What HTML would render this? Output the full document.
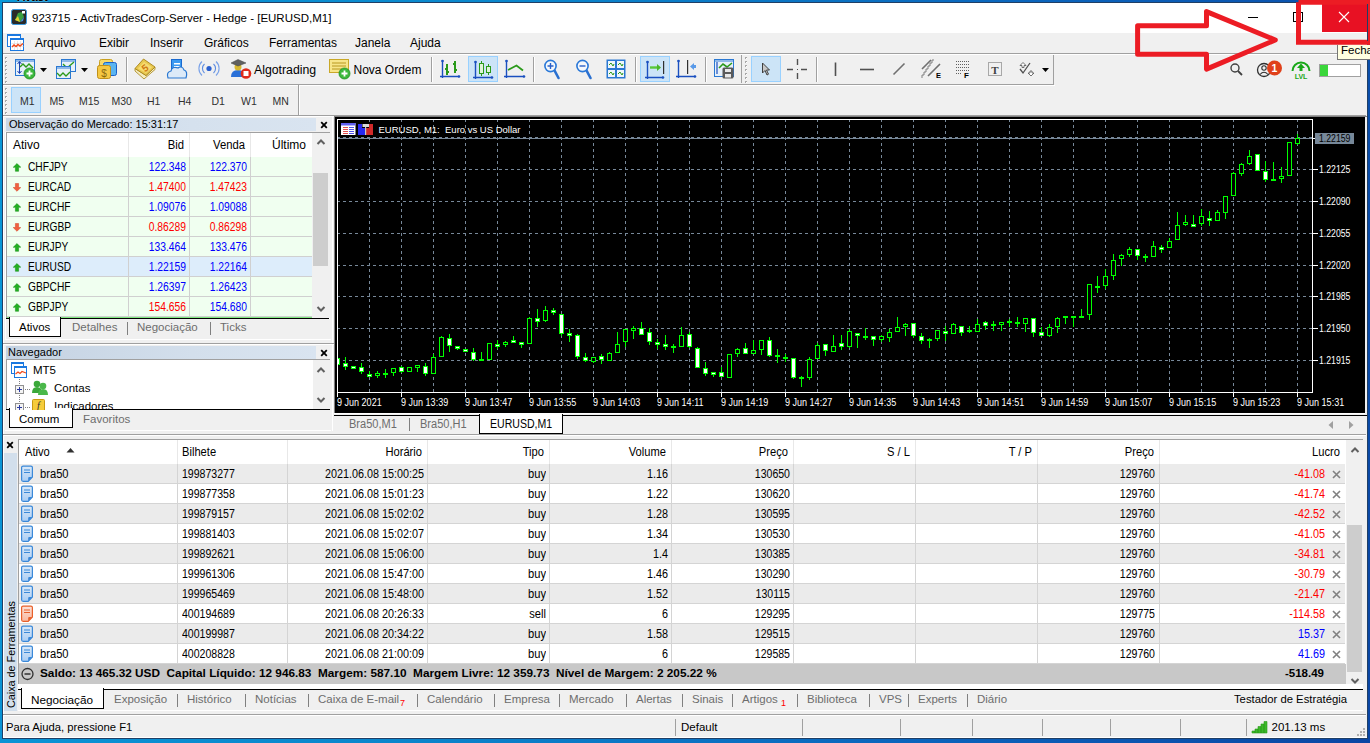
<!DOCTYPE html><html><head><meta charset="utf-8"><style>
*{margin:0;padding:0;box-sizing:border-box}
html,body{width:1370px;height:743px;overflow:hidden}
body{position:relative;background:linear-gradient(100deg,#0a98d8 0%,#0a86cc 35%,#0a64bc 70%,#0a46a4 100%);font-family:"Liberation Sans",sans-serif}
.t{position:absolute;white-space:nowrap;line-height:1;font-family:"Liberation Sans",sans-serif}
.r{position:absolute}
</style></head><body><div class="r" style="left:2px;top:2px;width:1366px;height:737px;background:#f0f0f0;border:1px solid #1f3f66"></div>
<div class="r" style="left:3px;top:3px;width:1px;height:734px;background:#fff;"></div>
<div class="r" style="left:3px;top:737px;width:1364px;height:1px;background:#fff;"></div>
<div class="r" style="left:3px;top:3px;width:1363px;height:30px;background:#fff;"></div>
<div class="t" style="left:32px;top:13px;font-size:11.5px;color:#000;">923715 - ActivTradesCorp-Server - Hedge - [EURUSD,M1]</div>
<div class="r" style="left:3px;top:33px;width:1363px;height:20px;background:#f0f0f0;"></div>
<div class="t" style="left:35px;top:37px;font-size:12px;color:#000;">Arquivo</div>
<div class="t" style="left:99px;top:37px;font-size:12px;color:#000;">Exibir</div>
<div class="t" style="left:150px;top:37px;font-size:12px;color:#000;">Inserir</div>
<div class="t" style="left:204px;top:37px;font-size:12px;color:#000;">Gráficos</div>
<div class="t" style="left:269px;top:37px;font-size:12px;color:#000;">Ferramentas</div>
<div class="t" style="left:355px;top:37px;font-size:12px;color:#000;">Janela</div>
<div class="t" style="left:410px;top:37px;font-size:12px;color:#000;">Ajuda</div>
<div class="r" style="left:3px;top:53px;width:1363px;height:1px;background:#a0a0a0;"></div>
<div class="r" style="left:3px;top:54px;width:1363px;height:1px;background:#fff;"></div>
<div class="r" style="left:3px;top:84px;width:1051px;height:1px;background:#a0a0a0;"></div>
<div class="r" style="left:3px;top:85px;width:1052px;height:1px;background:#fff;"></div>
<div class="r" style="left:3px;top:115px;width:1363px;height:1px;background:#a0a0a0;"></div>
<div class="r" style="left:3px;top:116px;width:1363px;height:1px;background:#fff;"></div>
<svg style="position:absolute;left:334px;top:116px" width="1033" height="318" viewBox="334 116 1033 318" shape-rendering="crispEdges">
<rect x="334" y="117" width="1033" height="296" fill="#000"/><rect x="334" y="117" width="1" height="296" fill="#808080"/><rect x="334" y="116" width="1033" height="1" fill="#808080"/>
<line x1="369.5" y1="119" x2="369.5" y2="392" stroke="#778899" stroke-dasharray="3 3"/>
<line x1="401.5" y1="119" x2="401.5" y2="392" stroke="#778899" stroke-dasharray="3 3"/>
<line x1="433.5" y1="119" x2="433.5" y2="392" stroke="#778899" stroke-dasharray="3 3"/>
<line x1="465.5" y1="119" x2="465.5" y2="392" stroke="#778899" stroke-dasharray="3 3"/>
<line x1="497.5" y1="119" x2="497.5" y2="392" stroke="#778899" stroke-dasharray="3 3"/>
<line x1="529.5" y1="119" x2="529.5" y2="392" stroke="#778899" stroke-dasharray="3 3"/>
<line x1="561.5" y1="119" x2="561.5" y2="392" stroke="#778899" stroke-dasharray="3 3"/>
<line x1="593.5" y1="119" x2="593.5" y2="392" stroke="#778899" stroke-dasharray="3 3"/>
<line x1="625.5" y1="119" x2="625.5" y2="392" stroke="#778899" stroke-dasharray="3 3"/>
<line x1="657.5" y1="119" x2="657.5" y2="392" stroke="#778899" stroke-dasharray="3 3"/>
<line x1="689.5" y1="119" x2="689.5" y2="392" stroke="#778899" stroke-dasharray="3 3"/>
<line x1="721.5" y1="119" x2="721.5" y2="392" stroke="#778899" stroke-dasharray="3 3"/>
<line x1="753.5" y1="119" x2="753.5" y2="392" stroke="#778899" stroke-dasharray="3 3"/>
<line x1="785.5" y1="119" x2="785.5" y2="392" stroke="#778899" stroke-dasharray="3 3"/>
<line x1="817.5" y1="119" x2="817.5" y2="392" stroke="#778899" stroke-dasharray="3 3"/>
<line x1="849.5" y1="119" x2="849.5" y2="392" stroke="#778899" stroke-dasharray="3 3"/>
<line x1="881.5" y1="119" x2="881.5" y2="392" stroke="#778899" stroke-dasharray="3 3"/>
<line x1="913.5" y1="119" x2="913.5" y2="392" stroke="#778899" stroke-dasharray="3 3"/>
<line x1="945.5" y1="119" x2="945.5" y2="392" stroke="#778899" stroke-dasharray="3 3"/>
<line x1="977.5" y1="119" x2="977.5" y2="392" stroke="#778899" stroke-dasharray="3 3"/>
<line x1="1009.5" y1="119" x2="1009.5" y2="392" stroke="#778899" stroke-dasharray="3 3"/>
<line x1="1041.5" y1="119" x2="1041.5" y2="392" stroke="#778899" stroke-dasharray="3 3"/>
<line x1="1073.5" y1="119" x2="1073.5" y2="392" stroke="#778899" stroke-dasharray="3 3"/>
<line x1="1105.5" y1="119" x2="1105.5" y2="392" stroke="#778899" stroke-dasharray="3 3"/>
<line x1="1137.5" y1="119" x2="1137.5" y2="392" stroke="#778899" stroke-dasharray="3 3"/>
<line x1="1169.5" y1="119" x2="1169.5" y2="392" stroke="#778899" stroke-dasharray="3 3"/>
<line x1="1201.5" y1="119" x2="1201.5" y2="392" stroke="#778899" stroke-dasharray="3 3"/>
<line x1="1233.5" y1="119" x2="1233.5" y2="392" stroke="#778899" stroke-dasharray="3 3"/>
<line x1="1265.5" y1="119" x2="1265.5" y2="392" stroke="#778899" stroke-dasharray="3 3"/>
<line x1="1297.5" y1="119" x2="1297.5" y2="392" stroke="#778899" stroke-dasharray="3 3"/>
<line x1="337" y1="137.5" x2="1312" y2="137.5" stroke="#778899" stroke-dasharray="3 3"/>
<line x1="337" y1="169.5" x2="1312" y2="169.5" stroke="#778899" stroke-dasharray="3 3"/>
<line x1="337" y1="201.5" x2="1312" y2="201.5" stroke="#778899" stroke-dasharray="3 3"/>
<line x1="337" y1="233.5" x2="1312" y2="233.5" stroke="#778899" stroke-dasharray="3 3"/>
<line x1="337" y1="265.5" x2="1312" y2="265.5" stroke="#778899" stroke-dasharray="3 3"/>
<line x1="337" y1="296.5" x2="1312" y2="296.5" stroke="#778899" stroke-dasharray="3 3"/>
<line x1="337" y1="328.5" x2="1312" y2="328.5" stroke="#778899" stroke-dasharray="3 3"/>
<line x1="337" y1="360.5" x2="1312" y2="360.5" stroke="#778899" stroke-dasharray="3 3"/>
<line x1="338" y1="138.5" x2="1312" y2="138.5" stroke="#778899"/>
<rect x="337" y="356" width="1" height="11" fill="#00ff00"/>
<rect x="335" y="358" width="5" height="7" fill="#00ff00"/>
<rect x="336" y="359" width="3" height="5" fill="#fff"/>
<rect x="345" y="357" width="1" height="13" fill="#00ff00"/>
<rect x="343" y="363" width="5" height="4" fill="#00ff00"/>
<rect x="344" y="364" width="3" height="2" fill="#fff"/>
<rect x="353" y="366" width="1" height="3" fill="#00ff00"/>
<rect x="351" y="366" width="5" height="3" fill="#00ff00"/>
<rect x="352" y="367" width="3" height="1" fill="#fff"/>
<rect x="361" y="363" width="1" height="11" fill="#00ff00"/>
<rect x="359" y="367" width="5" height="5" fill="#00ff00"/>
<rect x="360" y="368" width="3" height="3" fill="#fff"/>
<rect x="369" y="371" width="1" height="6" fill="#00ff00"/>
<rect x="367" y="374" width="5" height="3" fill="#00ff00"/>
<rect x="368" y="375" width="3" height="1" fill="#fff"/>
<rect x="377" y="371" width="1" height="7" fill="#00ff00"/>
<rect x="375" y="373" width="5" height="3" fill="#00ff00"/>
<rect x="376" y="374" width="3" height="1" fill="#000"/>
<rect x="385" y="369" width="1" height="9" fill="#00ff00"/>
<rect x="383" y="373" width="5" height="2" fill="#00ff00"/>
<rect x="393" y="368" width="1" height="8" fill="#00ff00"/>
<rect x="391" y="368" width="5" height="5" fill="#00ff00"/>
<rect x="392" y="369" width="3" height="3" fill="#000"/>
<rect x="401" y="366" width="1" height="7" fill="#00ff00"/>
<rect x="399" y="367" width="5" height="5" fill="#00ff00"/>
<rect x="400" y="368" width="3" height="3" fill="#fff"/>
<rect x="409" y="367" width="1" height="5" fill="#00ff00"/>
<rect x="407" y="367" width="5" height="5" fill="#00ff00"/>
<rect x="408" y="368" width="3" height="3" fill="#000"/>
<rect x="417" y="365" width="1" height="7" fill="#00ff00"/>
<rect x="415" y="365" width="5" height="3" fill="#00ff00"/>
<rect x="416" y="366" width="3" height="1" fill="#000"/>
<rect x="425" y="363" width="1" height="13" fill="#00ff00"/>
<rect x="423" y="366" width="5" height="8" fill="#00ff00"/>
<rect x="424" y="367" width="3" height="6" fill="#fff"/>
<rect x="433" y="354" width="1" height="20" fill="#00ff00"/>
<rect x="431" y="357" width="5" height="17" fill="#00ff00"/>
<rect x="432" y="358" width="3" height="15" fill="#000"/>
<rect x="441" y="336" width="1" height="21" fill="#00ff00"/>
<rect x="439" y="337" width="5" height="20" fill="#00ff00"/>
<rect x="440" y="338" width="3" height="18" fill="#000"/>
<rect x="449" y="334" width="1" height="18" fill="#00ff00"/>
<rect x="447" y="338" width="5" height="8" fill="#00ff00"/>
<rect x="448" y="339" width="3" height="6" fill="#fff"/>
<rect x="457" y="346" width="1" height="4" fill="#00ff00"/>
<rect x="455" y="346" width="5" height="3" fill="#00ff00"/>
<rect x="456" y="347" width="3" height="1" fill="#fff"/>
<rect x="465" y="349" width="1" height="3" fill="#00ff00"/>
<rect x="463" y="349" width="5" height="3" fill="#00ff00"/>
<rect x="464" y="350" width="3" height="1" fill="#fff"/>
<rect x="473" y="348" width="1" height="13" fill="#00ff00"/>
<rect x="471" y="352" width="5" height="8" fill="#00ff00"/>
<rect x="472" y="353" width="3" height="6" fill="#fff"/>
<rect x="481" y="352" width="1" height="8" fill="#00ff00"/>
<rect x="479" y="359" width="5" height="2" fill="#00ff00"/>
<rect x="489" y="343" width="1" height="17" fill="#00ff00"/>
<rect x="487" y="343" width="5" height="17" fill="#00ff00"/>
<rect x="488" y="344" width="3" height="15" fill="#000"/>
<rect x="497" y="340" width="1" height="9" fill="#00ff00"/>
<rect x="495" y="344" width="5" height="3" fill="#00ff00"/>
<rect x="496" y="345" width="3" height="1" fill="#fff"/>
<rect x="505" y="341" width="1" height="6" fill="#00ff00"/>
<rect x="503" y="342" width="5" height="3" fill="#00ff00"/>
<rect x="504" y="343" width="3" height="1" fill="#000"/>
<rect x="513" y="336" width="1" height="7" fill="#00ff00"/>
<rect x="511" y="340" width="5" height="3" fill="#00ff00"/>
<rect x="512" y="341" width="3" height="1" fill="#fff"/>
<rect x="521" y="342" width="1" height="6" fill="#00ff00"/>
<rect x="519" y="342" width="5" height="3" fill="#00ff00"/>
<rect x="520" y="343" width="3" height="1" fill="#fff"/>
<rect x="529" y="317" width="1" height="27" fill="#00ff00"/>
<rect x="527" y="318" width="5" height="26" fill="#00ff00"/>
<rect x="528" y="319" width="3" height="24" fill="#000"/>
<rect x="537" y="309" width="1" height="18" fill="#00ff00"/>
<rect x="535" y="318" width="5" height="4" fill="#00ff00"/>
<rect x="536" y="319" width="3" height="2" fill="#fff"/>
<rect x="545" y="306" width="1" height="16" fill="#00ff00"/>
<rect x="543" y="310" width="5" height="11" fill="#00ff00"/>
<rect x="544" y="311" width="3" height="9" fill="#000"/>
<rect x="553" y="308" width="1" height="7" fill="#00ff00"/>
<rect x="551" y="310" width="5" height="3" fill="#00ff00"/>
<rect x="552" y="311" width="3" height="1" fill="#fff"/>
<rect x="561" y="314" width="1" height="22" fill="#00ff00"/>
<rect x="559" y="314" width="5" height="20" fill="#00ff00"/>
<rect x="560" y="315" width="3" height="18" fill="#fff"/>
<rect x="569" y="329" width="1" height="13" fill="#00ff00"/>
<rect x="567" y="333" width="5" height="3" fill="#00ff00"/>
<rect x="568" y="334" width="3" height="1" fill="#fff"/>
<rect x="577" y="334" width="1" height="25" fill="#00ff00"/>
<rect x="575" y="335" width="5" height="22" fill="#00ff00"/>
<rect x="576" y="336" width="3" height="20" fill="#fff"/>
<rect x="585" y="353" width="1" height="9" fill="#00ff00"/>
<rect x="583" y="357" width="5" height="4" fill="#00ff00"/>
<rect x="584" y="358" width="3" height="2" fill="#fff"/>
<rect x="593" y="357" width="1" height="6" fill="#00ff00"/>
<rect x="591" y="357" width="5" height="5" fill="#00ff00"/>
<rect x="592" y="358" width="3" height="3" fill="#000"/>
<rect x="601" y="354" width="1" height="10" fill="#00ff00"/>
<rect x="599" y="356" width="5" height="4" fill="#00ff00"/>
<rect x="600" y="357" width="3" height="2" fill="#fff"/>
<rect x="609" y="352" width="1" height="9" fill="#00ff00"/>
<rect x="607" y="353" width="5" height="8" fill="#00ff00"/>
<rect x="608" y="354" width="3" height="6" fill="#000"/>
<rect x="617" y="332" width="1" height="21" fill="#00ff00"/>
<rect x="615" y="344" width="5" height="9" fill="#00ff00"/>
<rect x="616" y="345" width="3" height="7" fill="#000"/>
<rect x="625" y="329" width="1" height="18" fill="#00ff00"/>
<rect x="623" y="329" width="5" height="13" fill="#00ff00"/>
<rect x="624" y="330" width="3" height="11" fill="#000"/>
<rect x="633" y="326" width="1" height="13" fill="#00ff00"/>
<rect x="631" y="328" width="5" height="3" fill="#00ff00"/>
<rect x="632" y="329" width="3" height="1" fill="#000"/>
<rect x="641" y="322" width="1" height="13" fill="#00ff00"/>
<rect x="639" y="328" width="5" height="7" fill="#00ff00"/>
<rect x="640" y="329" width="3" height="5" fill="#fff"/>
<rect x="649" y="328" width="1" height="17" fill="#00ff00"/>
<rect x="647" y="332" width="5" height="10" fill="#00ff00"/>
<rect x="648" y="333" width="3" height="8" fill="#fff"/>
<rect x="657" y="339" width="1" height="10" fill="#00ff00"/>
<rect x="655" y="342" width="5" height="3" fill="#00ff00"/>
<rect x="656" y="343" width="3" height="1" fill="#fff"/>
<rect x="665" y="335" width="1" height="15" fill="#00ff00"/>
<rect x="663" y="344" width="5" height="3" fill="#00ff00"/>
<rect x="664" y="345" width="3" height="1" fill="#fff"/>
<rect x="673" y="344" width="1" height="9" fill="#00ff00"/>
<rect x="671" y="346" width="5" height="2" fill="#00ff00"/>
<rect x="681" y="327" width="1" height="20" fill="#00ff00"/>
<rect x="679" y="335" width="5" height="12" fill="#00ff00"/>
<rect x="680" y="336" width="3" height="10" fill="#000"/>
<rect x="689" y="332" width="1" height="16" fill="#00ff00"/>
<rect x="687" y="334" width="5" height="13" fill="#00ff00"/>
<rect x="688" y="335" width="3" height="11" fill="#fff"/>
<rect x="697" y="347" width="1" height="21" fill="#00ff00"/>
<rect x="695" y="348" width="5" height="20" fill="#00ff00"/>
<rect x="696" y="349" width="3" height="18" fill="#fff"/>
<rect x="705" y="362" width="1" height="14" fill="#00ff00"/>
<rect x="703" y="368" width="5" height="6" fill="#00ff00"/>
<rect x="704" y="369" width="3" height="4" fill="#fff"/>
<rect x="713" y="372" width="1" height="5" fill="#00ff00"/>
<rect x="711" y="372" width="5" height="3" fill="#00ff00"/>
<rect x="712" y="373" width="3" height="1" fill="#fff"/>
<rect x="721" y="367" width="1" height="10" fill="#00ff00"/>
<rect x="719" y="372" width="5" height="5" fill="#00ff00"/>
<rect x="720" y="373" width="3" height="3" fill="#fff"/>
<rect x="729" y="354" width="1" height="24" fill="#00ff00"/>
<rect x="727" y="354" width="5" height="24" fill="#00ff00"/>
<rect x="728" y="355" width="3" height="22" fill="#000"/>
<rect x="737" y="348" width="1" height="9" fill="#00ff00"/>
<rect x="735" y="349" width="5" height="5" fill="#00ff00"/>
<rect x="736" y="350" width="3" height="3" fill="#000"/>
<rect x="745" y="343" width="1" height="11" fill="#00ff00"/>
<rect x="743" y="348" width="5" height="6" fill="#00ff00"/>
<rect x="744" y="349" width="3" height="4" fill="#fff"/>
<rect x="753" y="340" width="1" height="14" fill="#00ff00"/>
<rect x="751" y="350" width="5" height="4" fill="#00ff00"/>
<rect x="752" y="351" width="3" height="2" fill="#000"/>
<rect x="761" y="340" width="1" height="15" fill="#00ff00"/>
<rect x="759" y="340" width="5" height="10" fill="#00ff00"/>
<rect x="760" y="341" width="3" height="8" fill="#000"/>
<rect x="769" y="337" width="1" height="20" fill="#00ff00"/>
<rect x="767" y="340" width="5" height="16" fill="#00ff00"/>
<rect x="768" y="341" width="3" height="14" fill="#fff"/>
<rect x="777" y="349" width="1" height="14" fill="#00ff00"/>
<rect x="775" y="355" width="5" height="2" fill="#00ff00"/>
<rect x="785" y="354" width="1" height="8" fill="#00ff00"/>
<rect x="783" y="357" width="5" height="2" fill="#00ff00"/>
<rect x="793" y="358" width="1" height="21" fill="#00ff00"/>
<rect x="791" y="358" width="5" height="20" fill="#00ff00"/>
<rect x="792" y="359" width="3" height="18" fill="#fff"/>
<rect x="801" y="376" width="1" height="11" fill="#00ff00"/>
<rect x="799" y="377" width="5" height="2" fill="#00ff00"/>
<rect x="809" y="357" width="1" height="23" fill="#00ff00"/>
<rect x="807" y="359" width="5" height="19" fill="#00ff00"/>
<rect x="808" y="360" width="3" height="17" fill="#000"/>
<rect x="817" y="343" width="1" height="16" fill="#00ff00"/>
<rect x="815" y="345" width="5" height="14" fill="#00ff00"/>
<rect x="816" y="346" width="3" height="12" fill="#000"/>
<rect x="825" y="344" width="1" height="12" fill="#00ff00"/>
<rect x="823" y="344" width="5" height="7" fill="#00ff00"/>
<rect x="824" y="345" width="3" height="5" fill="#fff"/>
<rect x="833" y="335" width="1" height="17" fill="#00ff00"/>
<rect x="831" y="346" width="5" height="6" fill="#00ff00"/>
<rect x="832" y="347" width="3" height="4" fill="#000"/>
<rect x="841" y="335" width="1" height="15" fill="#00ff00"/>
<rect x="839" y="343" width="5" height="4" fill="#00ff00"/>
<rect x="840" y="344" width="3" height="2" fill="#fff"/>
<rect x="849" y="329" width="1" height="19" fill="#00ff00"/>
<rect x="847" y="331" width="5" height="16" fill="#00ff00"/>
<rect x="848" y="332" width="3" height="14" fill="#000"/>
<rect x="857" y="333" width="1" height="15" fill="#00ff00"/>
<rect x="855" y="333" width="5" height="3" fill="#00ff00"/>
<rect x="856" y="334" width="3" height="1" fill="#fff"/>
<rect x="865" y="328" width="1" height="12" fill="#00ff00"/>
<rect x="863" y="336" width="5" height="2" fill="#00ff00"/>
<rect x="873" y="336" width="1" height="10" fill="#00ff00"/>
<rect x="871" y="336" width="5" height="4" fill="#00ff00"/>
<rect x="872" y="337" width="3" height="2" fill="#fff"/>
<rect x="881" y="335" width="1" height="7" fill="#00ff00"/>
<rect x="879" y="336" width="5" height="4" fill="#00ff00"/>
<rect x="880" y="337" width="3" height="2" fill="#000"/>
<rect x="889" y="329" width="1" height="13" fill="#00ff00"/>
<rect x="887" y="332" width="5" height="6" fill="#00ff00"/>
<rect x="888" y="333" width="3" height="4" fill="#000"/>
<rect x="897" y="317" width="1" height="15" fill="#00ff00"/>
<rect x="895" y="327" width="5" height="5" fill="#00ff00"/>
<rect x="896" y="328" width="3" height="3" fill="#000"/>
<rect x="905" y="323" width="1" height="13" fill="#00ff00"/>
<rect x="903" y="324" width="5" height="3" fill="#00ff00"/>
<rect x="904" y="325" width="3" height="1" fill="#000"/>
<rect x="913" y="323" width="1" height="15" fill="#00ff00"/>
<rect x="911" y="323" width="5" height="13" fill="#00ff00"/>
<rect x="912" y="324" width="3" height="11" fill="#fff"/>
<rect x="921" y="333" width="1" height="11" fill="#00ff00"/>
<rect x="919" y="336" width="5" height="5" fill="#00ff00"/>
<rect x="920" y="337" width="3" height="3" fill="#fff"/>
<rect x="929" y="338" width="1" height="10" fill="#00ff00"/>
<rect x="927" y="339" width="5" height="2" fill="#00ff00"/>
<rect x="937" y="330" width="1" height="11" fill="#00ff00"/>
<rect x="935" y="330" width="5" height="9" fill="#00ff00"/>
<rect x="936" y="331" width="3" height="7" fill="#000"/>
<rect x="945" y="326" width="1" height="15" fill="#00ff00"/>
<rect x="943" y="331" width="5" height="3" fill="#00ff00"/>
<rect x="944" y="332" width="3" height="1" fill="#fff"/>
<rect x="953" y="323" width="1" height="11" fill="#00ff00"/>
<rect x="951" y="324" width="5" height="10" fill="#00ff00"/>
<rect x="952" y="325" width="3" height="8" fill="#000"/>
<rect x="961" y="326" width="1" height="10" fill="#00ff00"/>
<rect x="959" y="326" width="5" height="7" fill="#00ff00"/>
<rect x="960" y="327" width="3" height="5" fill="#fff"/>
<rect x="969" y="326" width="1" height="7" fill="#00ff00"/>
<rect x="967" y="330" width="5" height="2" fill="#00ff00"/>
<rect x="977" y="319" width="1" height="13" fill="#00ff00"/>
<rect x="975" y="324" width="5" height="8" fill="#00ff00"/>
<rect x="976" y="325" width="3" height="6" fill="#000"/>
<rect x="985" y="321" width="1" height="9" fill="#00ff00"/>
<rect x="983" y="322" width="5" height="4" fill="#00ff00"/>
<rect x="984" y="323" width="3" height="2" fill="#fff"/>
<rect x="993" y="321" width="1" height="10" fill="#00ff00"/>
<rect x="991" y="324" width="5" height="2" fill="#00ff00"/>
<rect x="1001" y="322" width="1" height="9" fill="#00ff00"/>
<rect x="999" y="322" width="5" height="3" fill="#00ff00"/>
<rect x="1000" y="323" width="3" height="1" fill="#000"/>
<rect x="1009" y="319" width="1" height="8" fill="#00ff00"/>
<rect x="1007" y="321" width="5" height="2" fill="#00ff00"/>
<rect x="1017" y="317" width="1" height="10" fill="#00ff00"/>
<rect x="1015" y="322" width="5" height="2" fill="#00ff00"/>
<rect x="1025" y="318" width="1" height="14" fill="#00ff00"/>
<rect x="1023" y="318" width="5" height="6" fill="#00ff00"/>
<rect x="1024" y="319" width="3" height="4" fill="#000"/>
<rect x="1033" y="318" width="1" height="19" fill="#00ff00"/>
<rect x="1031" y="318" width="5" height="15" fill="#00ff00"/>
<rect x="1032" y="319" width="3" height="13" fill="#fff"/>
<rect x="1041" y="327" width="1" height="9" fill="#00ff00"/>
<rect x="1039" y="332" width="5" height="4" fill="#00ff00"/>
<rect x="1040" y="333" width="3" height="2" fill="#fff"/>
<rect x="1049" y="324" width="1" height="13" fill="#00ff00"/>
<rect x="1047" y="327" width="5" height="9" fill="#00ff00"/>
<rect x="1048" y="328" width="3" height="7" fill="#000"/>
<rect x="1057" y="317" width="1" height="16" fill="#00ff00"/>
<rect x="1055" y="318" width="5" height="9" fill="#00ff00"/>
<rect x="1056" y="319" width="3" height="7" fill="#000"/>
<rect x="1065" y="316" width="1" height="8" fill="#00ff00"/>
<rect x="1063" y="316" width="5" height="2" fill="#00ff00"/>
<rect x="1073" y="316" width="1" height="11" fill="#00ff00"/>
<rect x="1071" y="316" width="5" height="2" fill="#00ff00"/>
<rect x="1081" y="309" width="1" height="7" fill="#00ff00"/>
<rect x="1079" y="316" width="5" height="2" fill="#00ff00"/>
<rect x="1089" y="284" width="1" height="36" fill="#00ff00"/>
<rect x="1087" y="284" width="5" height="31" fill="#00ff00"/>
<rect x="1088" y="285" width="3" height="29" fill="#000"/>
<rect x="1097" y="276" width="1" height="17" fill="#00ff00"/>
<rect x="1095" y="286" width="5" height="2" fill="#00ff00"/>
<rect x="1105" y="269" width="1" height="20" fill="#00ff00"/>
<rect x="1103" y="276" width="5" height="10" fill="#00ff00"/>
<rect x="1104" y="277" width="3" height="8" fill="#000"/>
<rect x="1113" y="254" width="1" height="26" fill="#00ff00"/>
<rect x="1111" y="260" width="5" height="16" fill="#00ff00"/>
<rect x="1112" y="261" width="3" height="14" fill="#000"/>
<rect x="1121" y="254" width="1" height="12" fill="#00ff00"/>
<rect x="1119" y="255" width="5" height="4" fill="#00ff00"/>
<rect x="1120" y="256" width="3" height="2" fill="#000"/>
<rect x="1129" y="247" width="1" height="10" fill="#00ff00"/>
<rect x="1127" y="249" width="5" height="6" fill="#00ff00"/>
<rect x="1128" y="250" width="3" height="4" fill="#000"/>
<rect x="1137" y="249" width="1" height="11" fill="#00ff00"/>
<rect x="1135" y="249" width="5" height="7" fill="#00ff00"/>
<rect x="1136" y="250" width="3" height="5" fill="#fff"/>
<rect x="1145" y="254" width="1" height="8" fill="#00ff00"/>
<rect x="1143" y="256" width="5" height="2" fill="#00ff00"/>
<rect x="1153" y="241" width="1" height="16" fill="#00ff00"/>
<rect x="1151" y="246" width="5" height="11" fill="#00ff00"/>
<rect x="1152" y="247" width="3" height="9" fill="#000"/>
<rect x="1161" y="245" width="1" height="8" fill="#00ff00"/>
<rect x="1159" y="247" width="5" height="3" fill="#00ff00"/>
<rect x="1160" y="248" width="3" height="1" fill="#fff"/>
<rect x="1169" y="238" width="1" height="10" fill="#00ff00"/>
<rect x="1167" y="241" width="5" height="7" fill="#00ff00"/>
<rect x="1168" y="242" width="3" height="5" fill="#000"/>
<rect x="1177" y="212" width="1" height="28" fill="#00ff00"/>
<rect x="1175" y="225" width="5" height="15" fill="#00ff00"/>
<rect x="1176" y="226" width="3" height="13" fill="#000"/>
<rect x="1185" y="215" width="1" height="11" fill="#00ff00"/>
<rect x="1183" y="222" width="5" height="3" fill="#00ff00"/>
<rect x="1184" y="223" width="3" height="1" fill="#000"/>
<rect x="1193" y="215" width="1" height="11" fill="#00ff00"/>
<rect x="1191" y="224" width="5" height="3" fill="#00ff00"/>
<rect x="1192" y="225" width="3" height="1" fill="#fff"/>
<rect x="1201" y="209" width="1" height="17" fill="#00ff00"/>
<rect x="1199" y="216" width="5" height="8" fill="#00ff00"/>
<rect x="1200" y="217" width="3" height="6" fill="#000"/>
<rect x="1209" y="211" width="1" height="15" fill="#00ff00"/>
<rect x="1207" y="218" width="5" height="3" fill="#00ff00"/>
<rect x="1208" y="219" width="3" height="1" fill="#fff"/>
<rect x="1217" y="210" width="1" height="11" fill="#00ff00"/>
<rect x="1215" y="212" width="5" height="9" fill="#00ff00"/>
<rect x="1216" y="213" width="3" height="7" fill="#000"/>
<rect x="1225" y="196" width="1" height="23" fill="#00ff00"/>
<rect x="1223" y="196" width="5" height="17" fill="#00ff00"/>
<rect x="1224" y="197" width="3" height="15" fill="#000"/>
<rect x="1233" y="172" width="1" height="24" fill="#00ff00"/>
<rect x="1231" y="173" width="5" height="23" fill="#00ff00"/>
<rect x="1232" y="174" width="3" height="21" fill="#000"/>
<rect x="1241" y="163" width="1" height="13" fill="#00ff00"/>
<rect x="1239" y="164" width="5" height="10" fill="#00ff00"/>
<rect x="1240" y="165" width="3" height="8" fill="#000"/>
<rect x="1249" y="150" width="1" height="15" fill="#00ff00"/>
<rect x="1247" y="156" width="5" height="8" fill="#00ff00"/>
<rect x="1248" y="157" width="3" height="6" fill="#000"/>
<rect x="1257" y="154" width="1" height="17" fill="#00ff00"/>
<rect x="1255" y="154" width="5" height="17" fill="#00ff00"/>
<rect x="1256" y="155" width="3" height="15" fill="#fff"/>
<rect x="1265" y="161" width="1" height="21" fill="#00ff00"/>
<rect x="1263" y="171" width="5" height="9" fill="#00ff00"/>
<rect x="1264" y="172" width="3" height="7" fill="#fff"/>
<rect x="1273" y="162" width="1" height="18" fill="#00ff00"/>
<rect x="1271" y="179" width="5" height="2" fill="#00ff00"/>
<rect x="1281" y="167" width="1" height="16" fill="#00ff00"/>
<rect x="1279" y="176" width="5" height="3" fill="#00ff00"/>
<rect x="1280" y="177" width="3" height="1" fill="#000"/>
<rect x="1289" y="142" width="1" height="34" fill="#00ff00"/>
<rect x="1287" y="142" width="5" height="34" fill="#00ff00"/>
<rect x="1288" y="143" width="3" height="32" fill="#000"/>
<rect x="1297" y="134" width="1" height="11" fill="#00ff00"/>
<rect x="1295" y="138" width="5" height="6" fill="#00ff00"/>
<rect x="1296" y="139" width="3" height="4" fill="#000"/>
<rect x="334" y="117" width="3" height="296" fill="#000"/><rect x="334" y="117" width="1" height="296" fill="#808080"/>
<rect x="337.5" y="119.5" width="975" height="273" fill="none" stroke="#fff"/>
<rect x="1313" y="169" width="5" height="1" fill="#fff"/>
<rect x="1313" y="201" width="5" height="1" fill="#fff"/>
<rect x="1313" y="233" width="5" height="1" fill="#fff"/>
<rect x="1313" y="265" width="5" height="1" fill="#fff"/>
<rect x="1313" y="296" width="5" height="1" fill="#fff"/>
<rect x="1313" y="328" width="5" height="1" fill="#fff"/>
<rect x="1313" y="360" width="5" height="1" fill="#fff"/>
<rect x="1313" y="138" width="2" height="1" fill="#fff"/>
<rect x="401" y="392" width="1" height="5" fill="#fff"/>
<rect x="465" y="392" width="1" height="5" fill="#fff"/>
<rect x="529" y="392" width="1" height="5" fill="#fff"/>
<rect x="593" y="392" width="1" height="5" fill="#fff"/>
<rect x="657" y="392" width="1" height="5" fill="#fff"/>
<rect x="721" y="392" width="1" height="5" fill="#fff"/>
<rect x="785" y="392" width="1" height="5" fill="#fff"/>
<rect x="849" y="392" width="1" height="5" fill="#fff"/>
<rect x="913" y="392" width="1" height="5" fill="#fff"/>
<rect x="977" y="392" width="1" height="5" fill="#fff"/>
<rect x="1041" y="392" width="1" height="5" fill="#fff"/>
<rect x="1105" y="392" width="1" height="5" fill="#fff"/>
<rect x="1169" y="392" width="1" height="5" fill="#fff"/>
<rect x="1233" y="392" width="1" height="5" fill="#fff"/>
<rect x="1297" y="392" width="1" height="5" fill="#fff"/>
<rect x="337" y="392" width="1" height="5" fill="#fff"/>
<rect x="1315" y="133" width="39" height="11" fill="#778899"/>
</svg>
<div class="r" style="left:6px;top:118px;width:310px;height:13px;background:linear-gradient(90deg,#c9d7e6,#d5e1ee 60%,#d9e4f0);"></div>
<div class="t" style="left:9px;top:118.69px;font-size:11px;color:#000;">Observação do Mercado: 15:31:17</div>
<svg class="r" style="left:320px;top:120.5px" width="8" height="8" viewBox="0 0 8 8"><path d="M1.2 1.2 L6.8 6.8 M6.8 1.2 L1.2 6.8" stroke="#000" stroke-width="1.8"/></svg>
<div class="r" style="left:6px;top:132px;width:324px;height:187px;background:#fff;border:1px solid #a0a0a0;border-bottom:none;border-right:none"></div>
<div class="r" style="left:128px;top:133px;width:1px;height:24px;background:#e8e8e8;"></div>
<div class="r" style="left:189px;top:133px;width:1px;height:24px;background:#e8e8e8;"></div>
<div class="r" style="left:250px;top:133px;width:1px;height:24px;background:#e8e8e8;"></div>
<div class="t" style="left:13px;top:138.84px;font-size:12px;color:#000;">Ativo</div>
<div class="t" style="left:-216px;width:400px;text-align:right;top:138.84px;font-size:12px;color:#000;transform:scaleX(0.94);transform-origin:100% 0;">Bid</div>
<div class="t" style="left:-155px;width:400px;text-align:right;top:138.84px;font-size:12px;color:#000;transform:scaleX(0.94);transform-origin:100% 0;">Venda</div>
<div class="t" style="left:-94px;width:400px;text-align:right;top:138.84px;font-size:12px;color:#000;">Último</div>
<div class="r" style="left:7px;top:157px;width:305px;height:20px;background:#f0fff0;"></div>
<div class="r" style="left:7px;top:176px;width:305px;height:1px;background:#d0d0d0;"></div>
<div class="r" style="left:128px;top:157px;width:1px;height:20px;background:#d0d0d0;"></div>
<div class="r" style="left:189px;top:157px;width:1px;height:20px;background:#d0d0d0;"></div>
<div class="r" style="left:250px;top:157px;width:1px;height:20px;background:#d0d0d0;"></div>
<svg class="r" style="left:13px;top:163px" width="8" height="9" viewBox="0 0 8 9"><path d="M4 0.5 L7.8 4.3 L5.6 4.3 L5.6 8.3 L2.4 8.3 L2.4 4.3 L0.2 4.3 Z" fill="#22b022" stroke="#168a16" stroke-width="0.5"/></svg>
<div class="t" style="left:28px;top:160.84px;font-size:12px;color:#000;transform:scaleX(0.85);transform-origin:0 0;">CHFJPY</div>
<div class="t" style="left:-214px;width:400px;text-align:right;top:160.84px;font-size:12px;color:#0000ff;transform:scaleX(0.86);transform-origin:100% 0;">122.348</div>
<div class="t" style="left:-153px;width:400px;text-align:right;top:160.84px;font-size:12px;color:#0000ff;transform:scaleX(0.86);transform-origin:100% 0;">122.370</div>
<div class="r" style="left:7px;top:177px;width:305px;height:20px;background:#f0fff0;"></div>
<div class="r" style="left:7px;top:196px;width:305px;height:1px;background:#d0d0d0;"></div>
<div class="r" style="left:128px;top:177px;width:1px;height:20px;background:#d0d0d0;"></div>
<div class="r" style="left:189px;top:177px;width:1px;height:20px;background:#d0d0d0;"></div>
<div class="r" style="left:250px;top:177px;width:1px;height:20px;background:#d0d0d0;"></div>
<svg class="r" style="left:13px;top:183px" width="8" height="9" viewBox="0 0 8 9"><path d="M4 8.3 L7.8 4.5 L5.6 4.5 L5.6 0.5 L2.4 0.5 L2.4 4.5 L0.2 4.5 Z" fill="#f06040" stroke="#d04020" stroke-width="0.5"/></svg>
<div class="t" style="left:28px;top:180.84px;font-size:12px;color:#000;transform:scaleX(0.85);transform-origin:0 0;">EURCAD</div>
<div class="t" style="left:-214px;width:400px;text-align:right;top:180.84px;font-size:12px;color:#ff0000;transform:scaleX(0.86);transform-origin:100% 0;">1.47400</div>
<div class="t" style="left:-153px;width:400px;text-align:right;top:180.84px;font-size:12px;color:#ff0000;transform:scaleX(0.86);transform-origin:100% 0;">1.47423</div>
<div class="r" style="left:7px;top:197px;width:305px;height:20px;background:#f0fff0;"></div>
<div class="r" style="left:7px;top:216px;width:305px;height:1px;background:#d0d0d0;"></div>
<div class="r" style="left:128px;top:197px;width:1px;height:20px;background:#d0d0d0;"></div>
<div class="r" style="left:189px;top:197px;width:1px;height:20px;background:#d0d0d0;"></div>
<div class="r" style="left:250px;top:197px;width:1px;height:20px;background:#d0d0d0;"></div>
<svg class="r" style="left:13px;top:203px" width="8" height="9" viewBox="0 0 8 9"><path d="M4 0.5 L7.8 4.3 L5.6 4.3 L5.6 8.3 L2.4 8.3 L2.4 4.3 L0.2 4.3 Z" fill="#22b022" stroke="#168a16" stroke-width="0.5"/></svg>
<div class="t" style="left:28px;top:200.84px;font-size:12px;color:#000;transform:scaleX(0.85);transform-origin:0 0;">EURCHF</div>
<div class="t" style="left:-214px;width:400px;text-align:right;top:200.84px;font-size:12px;color:#0000ff;transform:scaleX(0.86);transform-origin:100% 0;">1.09076</div>
<div class="t" style="left:-153px;width:400px;text-align:right;top:200.84px;font-size:12px;color:#0000ff;transform:scaleX(0.86);transform-origin:100% 0;">1.09088</div>
<div class="r" style="left:7px;top:217px;width:305px;height:20px;background:#f0fff0;"></div>
<div class="r" style="left:7px;top:236px;width:305px;height:1px;background:#d0d0d0;"></div>
<div class="r" style="left:128px;top:217px;width:1px;height:20px;background:#d0d0d0;"></div>
<div class="r" style="left:189px;top:217px;width:1px;height:20px;background:#d0d0d0;"></div>
<div class="r" style="left:250px;top:217px;width:1px;height:20px;background:#d0d0d0;"></div>
<svg class="r" style="left:13px;top:223px" width="8" height="9" viewBox="0 0 8 9"><path d="M4 8.3 L7.8 4.5 L5.6 4.5 L5.6 0.5 L2.4 0.5 L2.4 4.5 L0.2 4.5 Z" fill="#f06040" stroke="#d04020" stroke-width="0.5"/></svg>
<div class="t" style="left:28px;top:220.84px;font-size:12px;color:#000;transform:scaleX(0.85);transform-origin:0 0;">EURGBP</div>
<div class="t" style="left:-214px;width:400px;text-align:right;top:220.84px;font-size:12px;color:#ff0000;transform:scaleX(0.86);transform-origin:100% 0;">0.86289</div>
<div class="t" style="left:-153px;width:400px;text-align:right;top:220.84px;font-size:12px;color:#ff0000;transform:scaleX(0.86);transform-origin:100% 0;">0.86298</div>
<div class="r" style="left:7px;top:237px;width:305px;height:20px;background:#f0fff0;"></div>
<div class="r" style="left:7px;top:256px;width:305px;height:1px;background:#d0d0d0;"></div>
<div class="r" style="left:128px;top:237px;width:1px;height:20px;background:#d0d0d0;"></div>
<div class="r" style="left:189px;top:237px;width:1px;height:20px;background:#d0d0d0;"></div>
<div class="r" style="left:250px;top:237px;width:1px;height:20px;background:#d0d0d0;"></div>
<svg class="r" style="left:13px;top:243px" width="8" height="9" viewBox="0 0 8 9"><path d="M4 0.5 L7.8 4.3 L5.6 4.3 L5.6 8.3 L2.4 8.3 L2.4 4.3 L0.2 4.3 Z" fill="#22b022" stroke="#168a16" stroke-width="0.5"/></svg>
<div class="t" style="left:28px;top:240.84px;font-size:12px;color:#000;transform:scaleX(0.85);transform-origin:0 0;">EURJPY</div>
<div class="t" style="left:-214px;width:400px;text-align:right;top:240.84px;font-size:12px;color:#0000ff;transform:scaleX(0.86);transform-origin:100% 0;">133.464</div>
<div class="t" style="left:-153px;width:400px;text-align:right;top:240.84px;font-size:12px;color:#0000ff;transform:scaleX(0.86);transform-origin:100% 0;">133.476</div>
<div class="r" style="left:7px;top:257px;width:305px;height:20px;background:#ddedfb;"></div>
<div class="r" style="left:7px;top:276px;width:305px;height:1px;background:#d0d0d0;"></div>
<div class="r" style="left:128px;top:257px;width:1px;height:20px;background:#d0d0d0;"></div>
<div class="r" style="left:189px;top:257px;width:1px;height:20px;background:#d0d0d0;"></div>
<div class="r" style="left:250px;top:257px;width:1px;height:20px;background:#d0d0d0;"></div>
<svg class="r" style="left:13px;top:263px" width="8" height="9" viewBox="0 0 8 9"><path d="M4 0.5 L7.8 4.3 L5.6 4.3 L5.6 8.3 L2.4 8.3 L2.4 4.3 L0.2 4.3 Z" fill="#22b022" stroke="#168a16" stroke-width="0.5"/></svg>
<div class="t" style="left:28px;top:260.84px;font-size:12px;color:#000;transform:scaleX(0.85);transform-origin:0 0;">EURUSD</div>
<div class="t" style="left:-214px;width:400px;text-align:right;top:260.84px;font-size:12px;color:#0000ff;transform:scaleX(0.86);transform-origin:100% 0;">1.22159</div>
<div class="t" style="left:-153px;width:400px;text-align:right;top:260.84px;font-size:12px;color:#0000ff;transform:scaleX(0.86);transform-origin:100% 0;">1.22164</div>
<div class="r" style="left:7px;top:277px;width:305px;height:20px;background:#f0fff0;"></div>
<div class="r" style="left:7px;top:296px;width:305px;height:1px;background:#d0d0d0;"></div>
<div class="r" style="left:128px;top:277px;width:1px;height:20px;background:#d0d0d0;"></div>
<div class="r" style="left:189px;top:277px;width:1px;height:20px;background:#d0d0d0;"></div>
<div class="r" style="left:250px;top:277px;width:1px;height:20px;background:#d0d0d0;"></div>
<svg class="r" style="left:13px;top:283px" width="8" height="9" viewBox="0 0 8 9"><path d="M4 0.5 L7.8 4.3 L5.6 4.3 L5.6 8.3 L2.4 8.3 L2.4 4.3 L0.2 4.3 Z" fill="#22b022" stroke="#168a16" stroke-width="0.5"/></svg>
<div class="t" style="left:28px;top:280.84px;font-size:12px;color:#000;transform:scaleX(0.85);transform-origin:0 0;">GBPCHF</div>
<div class="t" style="left:-214px;width:400px;text-align:right;top:280.84px;font-size:12px;color:#0000ff;transform:scaleX(0.86);transform-origin:100% 0;">1.26397</div>
<div class="t" style="left:-153px;width:400px;text-align:right;top:280.84px;font-size:12px;color:#0000ff;transform:scaleX(0.86);transform-origin:100% 0;">1.26423</div>
<div class="r" style="left:7px;top:297px;width:305px;height:20px;background:#f0fff0;"></div>
<div class="r" style="left:7px;top:316px;width:305px;height:1px;background:#d0d0d0;"></div>
<div class="r" style="left:128px;top:297px;width:1px;height:20px;background:#d0d0d0;"></div>
<div class="r" style="left:189px;top:297px;width:1px;height:20px;background:#d0d0d0;"></div>
<div class="r" style="left:250px;top:297px;width:1px;height:20px;background:#d0d0d0;"></div>
<svg class="r" style="left:13px;top:303px" width="8" height="9" viewBox="0 0 8 9"><path d="M4 0.5 L7.8 4.3 L5.6 4.3 L5.6 8.3 L2.4 8.3 L2.4 4.3 L0.2 4.3 Z" fill="#22b022" stroke="#168a16" stroke-width="0.5"/></svg>
<div class="t" style="left:28px;top:300.84px;font-size:12px;color:#000;transform:scaleX(0.85);transform-origin:0 0;">GBPJPY</div>
<div class="t" style="left:-214px;width:400px;text-align:right;top:300.84px;font-size:12px;color:#ff0000;transform:scaleX(0.86);transform-origin:100% 0;">154.656</div>
<div class="t" style="left:-153px;width:400px;text-align:right;top:300.84px;font-size:12px;color:#0000ff;transform:scaleX(0.86);transform-origin:100% 0;">154.680</div>
<div class="r" style="left:7px;top:317px;width:305px;height:1px;background:#80e880;"></div>
<div class="r" style="left:312px;top:133px;width:18px;height:185px;background:#f0f0f0;"></div>
<div class="r" style="left:313px;top:173px;width:15px;height:93px;background:#cdcdcd;"></div>
<svg class="r" style="left:316px;top:138px" width="10" height="8" viewBox="0 0 10 8"><path d="M1.5 6 L5 2.5 L8.5 6" fill="none" stroke="#606060" stroke-width="2"/></svg>
<svg class="r" style="left:316px;top:305px" width="10" height="8" viewBox="0 0 10 8"><path d="M1.5 2 L5 5.5 L8.5 2" fill="none" stroke="#606060" stroke-width="2"/></svg>
<div class="r" style="left:6px;top:318px;width:323px;height:1px;background:#000;"></div>
<div class="r" style="left:9px;top:317px;width:52px;height:20px;background:#fff;border:1px solid #000;border-top:none"></div>
<div class="t" style="left:19px;top:322.27px;font-size:11.5px;color:#000;">Ativos</div>
<div class="t" style="left:72px;top:322.27px;font-size:11.5px;color:#6d6d6d;">Detalhes</div>
<div class="r" style="left:127px;top:322px;width:1px;height:13px;background:#808080;"></div>
<div class="t" style="left:137px;top:322.27px;font-size:11.5px;color:#6d6d6d;">Negociação</div>
<div class="r" style="left:210px;top:322px;width:1px;height:13px;background:#808080;"></div>
<div class="t" style="left:220px;top:322.27px;font-size:11.5px;color:#6d6d6d;">Ticks</div>
<div class="r" style="left:5px;top:132px;width:1px;height:208px;background:#fff;"></div>
<div class="r" style="left:332px;top:117px;width:1px;height:314px;background:#fff;"></div>
<div class="r" style="left:5px;top:339px;width:326px;height:1px;background:#fff;"></div>
<div class="r" style="left:3px;top:343px;width:331px;height:1px;background:#a0a0a0;"></div>
<div class="r" style="left:3px;top:344px;width:331px;height:1px;background:#fff;"></div>
<div class="r" style="left:6px;top:346px;width:310px;height:13px;background:linear-gradient(90deg,#c4d2e2,#d3dfec 60%,#d9e4f0);"></div>
<div class="t" style="left:8px;top:346.69px;font-size:11px;color:#000;">Navegador</div>
<svg class="r" style="left:320px;top:348.5px" width="8" height="8" viewBox="0 0 8 8"><path d="M1.2 1.2 L6.8 6.8 M6.8 1.2 L1.2 6.8" stroke="#000" stroke-width="1.8"/></svg>
<div class="r" style="left:6px;top:359px;width:324px;height:51px;background:#fff;border:1px solid #a0a0a0;border-bottom:none;border-right:none"></div>
<div class="r" style="left:313px;top:360px;width:17px;height:49px;background:#f0f0f0;"></div>
<svg class="r" style="left:316px;top:366px" width="10" height="8" viewBox="0 0 10 8"><path d="M1.5 6 L5 2.5 L8.5 6" fill="none" stroke="#606060" stroke-width="2"/></svg>
<svg class="r" style="left:316px;top:396px" width="10" height="8" viewBox="0 0 10 8"><path d="M1.5 2 L5 5.5 L8.5 2" fill="none" stroke="#606060" stroke-width="2"/></svg>
<div class="t" style="left:33px;top:365.27px;font-size:11.5px;color:#000;">MT5</div>
<div class="t" style="left:54px;top:383.27px;font-size:11.5px;color:#000;">Contas</div>
<div class="t" style="left:54px;top:401.27px;font-size:11.5px;color:#000;clip-path:inset(0 0 3px 0)">Indicadores</div>
<div class="r" style="left:6px;top:409px;width:324px;height:1px;background:#000;"></div>
<div class="r" style="left:9px;top:408px;width:64px;height:20px;background:#fff;border:1px solid #000;border-top:none"></div>
<div class="t" style="left:19px;top:414.27px;font-size:11.5px;color:#000;">Comum</div>
<div class="t" style="left:83px;top:414.27px;font-size:11.5px;color:#6d6d6d;">Favoritos</div>
<div class="r" style="left:5px;top:430px;width:326px;height:1px;background:#fff;"></div>
<svg class="r" style="left:0;top:54px" width="1370" height="62" viewBox="0 54 1370 62">
<rect x="5" y="57" width="2" height="2" fill="#a8a8a8"/><rect x="6" y="58" width="1" height="1" fill="#fff"/><rect x="5" y="61" width="2" height="2" fill="#a8a8a8"/><rect x="6" y="62" width="1" height="1" fill="#fff"/><rect x="5" y="65" width="2" height="2" fill="#a8a8a8"/><rect x="6" y="66" width="1" height="1" fill="#fff"/><rect x="5" y="69" width="2" height="2" fill="#a8a8a8"/><rect x="6" y="70" width="1" height="1" fill="#fff"/><rect x="5" y="73" width="2" height="2" fill="#a8a8a8"/><rect x="6" y="74" width="1" height="1" fill="#fff"/><rect x="5" y="77" width="2" height="2" fill="#a8a8a8"/><rect x="6" y="78" width="1" height="1" fill="#fff"/><rect x="5" y="81" width="2" height="2" fill="#a8a8a8"/><rect x="6" y="82" width="1" height="1" fill="#fff"/>
<rect x="15.5" y="59.5" width="19" height="16" fill="#e6f0fa" stroke="#2a78d2"/><rect x="16" y="60" width="18" height="2" fill="#8fb8e8"/>
<path d="M19.5 62 V73" stroke="#1a3fb0" stroke-width="1"/><path d="M17.5 64 l2 -2.5 l2 2.5 M17.5 71 l2 2.5 l2 -2.5" fill="none" stroke="#1a3fb0" stroke-width="1"/>
<polyline points="20,67 23,64 26,67 29,64 33,68" fill="none" stroke="#2a9a1a" stroke-width="1.4"/>
<circle cx="29.5" cy="73.5" r="5.5" fill="#3cb83c" stroke="#1f8f1f" stroke-width="0.8"/><path d="M26.5 73.5 h6 M29.5 70.5 v6" stroke="#fff" stroke-width="1.8"/>
<path d="M40 68 h7 l-3.5 4 z" fill="#000"/>
<rect x="61.5" y="59.5" width="14" height="12" fill="#e6f0fa" stroke="#2a78d2"/><rect x="62" y="60" width="13" height="2" fill="#8fb8e8"/>
<polyline points="63,64 67,68 74,62" fill="none" stroke="#2a9a1a" stroke-width="1.3"/>
<rect x="56.5" y="66.5" width="14" height="12" fill="#e6f0fa" stroke="#2a78d2"/><rect x="57" y="67" width="13" height="2" fill="#8fb8e8"/>
<polyline points="57,73 60,76 63,73 66,76 70,72" fill="none" stroke="#2a9a1a" stroke-width="1.3"/>
<path d="M81 68 h7 l-3.5 4 z" fill="#000"/>
<rect x="99.5" y="59.5" width="13" height="12" rx="2" fill="#f7d96a" stroke="#c9a020"/>
<rect x="103.5" y="62.5" width="13" height="13" rx="2" fill="#5ab4f0" stroke="#1a60c8"/>
<rect x="97.5" y="65.5" width="13" height="13" rx="2" fill="#f5c842" stroke="#c09018"/>
<text x="104" y="76.5" font-family="Liberation Sans" font-size="10" fill="#8a6a10" text-anchor="middle">$</text>
<rect x="126" y="57" width="1" height="25" fill="#a0a0a0"/><rect x="127" y="57" width="1" height="25" fill="#fff"/>
<path d="M135 71 L144 79 L155 69.5 L155 67 L146 75.5 L135 68.5 Z" fill="#f4ecc0" stroke="#b09028" stroke-width="0.9"/>
<path d="M135 68.5 L143.5 59 L155 67 L146 75.5 Z" fill="#e8c850" stroke="#a88418" stroke-width="0.9"/>
<path d="M138 68.5 L144 62 L152 67.2 L146 73 Z" fill="#f6dc70"/>
<text x="145" y="71.5" font-family="Liberation Sans" font-size="10" font-weight="bold" fill="#d07810" text-anchor="middle" transform="rotate(-38 145 68)">5</text>
<rect x="171.5" y="59.5" width="10" height="11" fill="#3c9af0" stroke="#1a6ad0"/>
<rect x="174" y="63" width="6" height="1.5" fill="#fff"/><rect x="174" y="66" width="6" height="1.5" fill="#fff"/>
<path d="M168 78 Q166 72 171 71 Q172 66 178 68 Q182 65 184 70 Q188 71 186 78 Z" fill="#dceaf8" stroke="#2a78d2" stroke-width="1.2"/>
<circle cx="209" cy="68.5" r="2.6" fill="#2a60d0"/>
<path d="M204.5 64 A6 6 0 0 0 204.5 73 M213.5 64 A6 6 0 0 1 213.5 73" fill="none" stroke="#5a8ae0" stroke-width="1.1"/>
<path d="M202 61.5 A9.5 9.5 0 0 0 202 75.5 M216 61.5 A9.5 9.5 0 0 1 216 75.5" fill="none" stroke="#7aa2e8" stroke-width="1.1"/>
<path d="M231 77 Q231 70 238 70 Q245 70 245 77 Z" fill="#2a70d8"/>
<circle cx="238" cy="67" r="3.5" fill="#d8b830"/>
<path d="M231 63 L238 59.5 L246 63 L238 66 Z" fill="#606060" stroke="#404040" stroke-width="0.5"/>
<circle cx="246" cy="73.5" r="5.3" fill="#e02a1a"/><rect x="243.5" y="71" width="5" height="5" fill="#fff"/>
<rect x="329.5" y="59.5" width="19" height="13" fill="#f7e58a" stroke="#c9a828"/>
<path d="M332 63h14M332 66h14M332 69h10" stroke="#b89820" stroke-width="1"/>
<circle cx="344.5" cy="73.5" r="5.5" fill="#3cb83c" stroke="#1f8f1f" stroke-width="0.8"/><path d="M341.5 73.5 h6 M344.5 70.5 v6" stroke="#fff" stroke-width="1.8"/>
<rect x="431" y="57" width="1" height="25" fill="#a0a0a0"/><rect x="432" y="57" width="1" height="25" fill="#fff"/>
<path d="M442.5 60 V78 M440 76.5 H459" stroke="#1a4fc0" stroke-width="1.4" fill="none"/><circle cx="442.5" cy="61" r="1.3" fill="#1a4fc0"/><circle cx="459" cy="76.5" r="1.3" fill="#1a4fc0"/>
<path d="M447 64 V75 M445 69h2 M447 72h2 M455 61 V73 M453 64h2 M455 70h2" stroke="#2a9a1a" stroke-width="2"/>
<rect x="468.5" y="56.5" width="29" height="25" fill="#cce4f7" stroke="#99d1ff"/>
<path d="M475.5 61 V79 M473 77.5 H492" stroke="#1a4fc0" stroke-width="1.4" fill="none"/><circle cx="475.5" cy="62" r="1.3" fill="#1a4fc0"/><circle cx="492" cy="77.5" r="1.3" fill="#1a4fc0"/>
<path d="M481.5 61 V76 M488.5 64 V75" stroke="#2a9a1a" stroke-width="1"/>
<rect x="479.5" y="63.5" width="4" height="10" fill="#e0f4d8" stroke="#2a9a1a"/>
<rect x="486.5" y="66.5" width="4" height="6" fill="#e0f4d8" stroke="#2a9a1a"/>
<path d="M506.5 60 V78 M504 76.5 H524" stroke="#1a4fc0" stroke-width="1.4" fill="none"/><circle cx="506.5" cy="61" r="1.3" fill="#1a4fc0"/><circle cx="524" cy="76.5" r="1.3" fill="#1a4fc0"/>
<polyline points="508,70 516.5,65.5 523,70.5" fill="none" stroke="#2a9a1a" stroke-width="1.8"/>
<rect x="533" y="57" width="1" height="25" fill="#a0a0a0"/><rect x="534" y="57" width="1" height="25" fill="#fff"/>
<path d="M554.0 69.5 L558.5 78" stroke="#2a70d0" stroke-width="2.6" stroke-linecap="round"/>
<circle cx="550.5" cy="66" r="5.6" fill="#f4f8fc" stroke="#2a78d8" stroke-width="1.6"/>
<path d="M547.5 66 h6 M550.5 63 v6" stroke="#2a60c8" stroke-width="1.4"/>
<path d="M586.0 69.5 L590.5 78" stroke="#2a70d0" stroke-width="2.6" stroke-linecap="round"/>
<circle cx="582.5" cy="66" r="5.6" fill="#f4f8fc" stroke="#2a78d8" stroke-width="1.6"/>
<path d="M579.5 66 h6" stroke="#2a60c8" stroke-width="1.4"/>
<rect x="606.5" y="59.5" width="19" height="19" fill="#2a78d2"/>
<rect x="608" y="61" width="7" height="7" fill="#eef5fb"/>
<polyline points="609,65 611,63 613,66 614,64" fill="none" stroke="#2a9a1a" stroke-width="1"/>
<rect x="617" y="61" width="7" height="7" fill="#eef5fb"/>
<polyline points="618,65 620,63 622,66 623,64" fill="none" stroke="#2a9a1a" stroke-width="1"/>
<rect x="608" y="70" width="7" height="7" fill="#eef5fb"/>
<polyline points="609,74 611,72 613,75 614,73" fill="none" stroke="#2a9a1a" stroke-width="1"/>
<rect x="617" y="70" width="7" height="7" fill="#eef5fb"/>
<polyline points="618,74 620,72 622,75 623,73" fill="none" stroke="#2a9a1a" stroke-width="1"/>
<rect x="635" y="57" width="1" height="25" fill="#a0a0a0"/><rect x="636" y="57" width="1" height="25" fill="#fff"/>
<rect x="640.5" y="56.5" width="29" height="25" fill="#cce4f7" stroke="#99d1ff"/>
<path d="M647.5 61 V79 M645 77.5 H663" stroke="#1a4fc0" stroke-width="1.4" fill="none"/><circle cx="647.5" cy="62" r="1.3" fill="#1a4fc0"/><circle cx="663" cy="77.5" r="1.3" fill="#1a4fc0"/>
<path d="M650 67.5 h9" stroke="#5ac83a" stroke-width="2.4"/><path d="M657 64 l4 3.5 l-4 3.5 z" fill="#4ab82a"/>
<rect x="663" y="61" width="1.2" height="13" fill="#303030"/>
<path d="M678.5 60 V78 M676 76.5 H695" stroke="#1a4fc0" stroke-width="1.4" fill="none"/><circle cx="678.5" cy="61" r="1.3" fill="#1a4fc0"/><circle cx="695" cy="76.5" r="1.3" fill="#1a4fc0"/>
<rect x="687" y="60" width="1.2" height="14" fill="#303030"/>
<path d="M690 66.5 l4 -3.5 v2 h2 v3 h-2 v2 z" fill="#5a9ae8"/>
<rect x="705" y="57" width="1" height="25" fill="#a0a0a0"/><rect x="706" y="57" width="1" height="25" fill="#fff"/>
<rect x="714.5" y="59.5" width="19" height="17" fill="#e6f0fa" stroke="#2a78d2"/><rect x="715" y="60" width="18" height="2" fill="#8fb8e8"/>
<path d="M717 62 V74" stroke="#1a4fc0" stroke-width="1.2"/>
<polyline points="719,68 723,64 727,67 732,63" fill="none" stroke="#2a9a1a" stroke-width="1.6"/>
<rect x="722.5" y="67.5" width="11" height="11" rx="1.5" fill="#5a5a5a"/><rect x="725" y="69" width="6" height="3" fill="#e8e8e8"/><rect x="725" y="74" width="6" height="3.5" fill="#e8e8e8"/>
<rect x="741" y="55" width="1" height="28" fill="#a0a0a0"/>
<rect x="745" y="57" width="2" height="2" fill="#a8a8a8"/><rect x="746" y="58" width="1" height="1" fill="#fff"/><rect x="745" y="61" width="2" height="2" fill="#a8a8a8"/><rect x="746" y="62" width="1" height="1" fill="#fff"/><rect x="745" y="65" width="2" height="2" fill="#a8a8a8"/><rect x="746" y="66" width="1" height="1" fill="#fff"/><rect x="745" y="69" width="2" height="2" fill="#a8a8a8"/><rect x="746" y="70" width="1" height="1" fill="#fff"/><rect x="745" y="73" width="2" height="2" fill="#a8a8a8"/><rect x="746" y="74" width="1" height="1" fill="#fff"/><rect x="745" y="77" width="2" height="2" fill="#a8a8a8"/><rect x="746" y="78" width="1" height="1" fill="#fff"/><rect x="745" y="81" width="2" height="2" fill="#a8a8a8"/><rect x="746" y="82" width="1" height="1" fill="#fff"/>
<rect x="751.5" y="56.5" width="29" height="25" fill="#cce4f7" stroke="#99d1ff"/>
<path d="M762.5 63 V73 L765 70.5 L767 75 L768.5 74.2 L766.5 70 L769.5 70 Z" fill="#c8c8c8" stroke="#404040" stroke-width="1"/>
<path d="M787 69.5 h6 M801 69.5 h6 M797.5 59 v6 M797.5 73 v6" stroke="#505050" stroke-width="1.4"/><rect x="797" y="69" width="1" height="1" fill="#505050"/>
<rect x="816" y="57" width="1" height="25" fill="#a0a0a0"/><rect x="817" y="57" width="1" height="25" fill="#fff"/>
<path d="M835.5 62.5 V76" stroke="#505050" stroke-width="1.6"/>
<path d="M860 69.5 H874" stroke="#505050" stroke-width="1.6"/>
<path d="M893.5 74.5 L904.5 63.5" stroke="#707070" stroke-width="1.6"/>
<path d="M922 69 L931 60 M928 76 L940 64" stroke="#707070" stroke-width="1.6"/>
<path d="M922 78 v-3 h2 v-3 h2 v-3 h2 v-3 h2 v-3 h2 v-3 h2" fill="none" stroke="#808080" stroke-width="1"/>
<text x="936" y="78" font-family="Liberation Sans" font-size="7.5" font-weight="bold" fill="#000">E</text>
<path d="M956 61.5 h13 M956 64.5 h13 M956 67.5 h13 M956 70.5 h13 M956 73.5 h6" stroke="#606060" stroke-width="1" stroke-dasharray="1 1"/>
<text x="964" y="78" font-family="Liberation Sans" font-size="8" font-weight="bold" fill="#000">F</text>
<rect x="988.5" y="62.5" width="13" height="13" fill="none" stroke="#606060" stroke-dasharray="1 1"/>
<text x="995" y="73.5" font-family="Liberation Serif" font-size="11" font-weight="bold" fill="#404040" text-anchor="middle">T</text>
<path d="M1020 69 L1023 73 L1030 63" fill="none" stroke="#505050" stroke-width="1.3"/>
<path d="M1023 62.5 l3 3 h-2 v2 h-2 v-2 h-2 z" fill="#fff" stroke="#505050" stroke-width="0.8"/>
<path d="M1031 76 l3 -3 h-2 v-2 h-2 v2 h-2 z" fill="#fff" stroke="#505050" stroke-width="0.8"/>
<path d="M1042 68 h7 l-3.5 4 z" fill="#000"/>
<rect x="1053" y="55" width="1" height="29" fill="#a0a0a0"/>
<rect x="5" y="88" width="2" height="2" fill="#a8a8a8"/><rect x="6" y="89" width="1" height="1" fill="#fff"/><rect x="5" y="92" width="2" height="2" fill="#a8a8a8"/><rect x="6" y="93" width="1" height="1" fill="#fff"/><rect x="5" y="96" width="2" height="2" fill="#a8a8a8"/><rect x="6" y="97" width="1" height="1" fill="#fff"/><rect x="5" y="100" width="2" height="2" fill="#a8a8a8"/><rect x="6" y="101" width="1" height="1" fill="#fff"/><rect x="5" y="104" width="2" height="2" fill="#a8a8a8"/><rect x="6" y="105" width="1" height="1" fill="#fff"/><rect x="5" y="108" width="2" height="2" fill="#a8a8a8"/><rect x="6" y="109" width="1" height="1" fill="#fff"/><rect x="5" y="112" width="2" height="2" fill="#a8a8a8"/><rect x="6" y="113" width="1" height="1" fill="#fff"/>
<rect x="11.5" y="87.5" width="29" height="25" fill="#cce4f7" stroke="#99d1ff"/>
<rect x="298" y="85" width="1" height="30" fill="#a0a0a0"/><rect x="299" y="85" width="1" height="30" fill="#fff"/>
<circle cx="1235" cy="68" r="4" fill="none" stroke="#404040" stroke-width="1.4"/><path d="M1238 71 L1242 75" stroke="#404040" stroke-width="1.8"/>
<circle cx="1264" cy="70" r="6.5" fill="none" stroke="#303030" stroke-width="1.3"/><circle cx="1264" cy="68" r="2.2" fill="none" stroke="#303030" stroke-width="1.1"/><path d="M1260 74.5 Q1264 70 1268 74.5" fill="none" stroke="#303030" stroke-width="1.1"/>
<circle cx="1274.5" cy="68" r="7.5" fill="#e0401a"/>
<text x="1274.5" y="72" font-family="Liberation Sans" font-size="10.5" font-weight="bold" fill="#fff" text-anchor="middle">1</text>
<path d="M1292.5 71 A8.5 8.5 0 0 1 1309.5 71" fill="none" stroke="#18a818" stroke-width="2"/>
<path d="M1297 68 l4 -4.5 l4 4.5 h-2.5 v3 h-3 v-3 z" fill="#18a818"/>
<text x="1301" y="79" font-family="Liberation Sans" font-size="7" font-weight="bold" fill="#18a818" text-anchor="middle">LVL</text>
<rect x="1319.5" y="64.5" width="41" height="12" fill="#fff" stroke="#a0a0a0"/>
<rect x="1320" y="65" width="8" height="11" fill="#3ad63a"/>
</svg>
<div class="t" style="left:254px;top:63.59px;font-size:12.3px;color:#000;">Algotrading</div>
<div class="t" style="left:353.5px;top:63.84px;font-size:12px;color:#000;">Nova Ordem</div>
<div class="t" style="left:20px;top:96.11px;font-size:10.5px;color:#303030;">M1</div>
<div class="t" style="left:49.5px;top:96.11px;font-size:10.5px;color:#303030;">M5</div>
<div class="t" style="left:79px;top:96.11px;font-size:10.5px;color:#303030;">M15</div>
<div class="t" style="left:111.5px;top:96.11px;font-size:10.5px;color:#303030;">M30</div>
<div class="t" style="left:147px;top:96.11px;font-size:10.5px;color:#303030;">H1</div>
<div class="t" style="left:178px;top:96.11px;font-size:10.5px;color:#303030;">H4</div>
<div class="t" style="left:211.5px;top:96.11px;font-size:10.5px;color:#303030;">D1</div>
<div class="t" style="left:241px;top:96.11px;font-size:10.5px;color:#303030;">W1</div>
<div class="t" style="left:272.5px;top:96.11px;font-size:10.5px;color:#303030;">MN</div>
<div class="t" style="left:378.5px;top:124.96px;font-size:9.5px;color:#fff;">EURUSD, M1:&nbsp; Euro vs US Dollar</div>
<svg class="r" style="left:340px;top:122px" width="36" height="14" viewBox="340 122 36 14"><rect x="341" y="123" width="14.5" height="12" fill="#fff"/><rect x="341" y="123" width="14.5" height="2.5" fill="#6060f0"/><rect x="343" y="127" width="5" height="1" fill="#e05050"/><rect x="349" y="127" width="5" height="1" fill="#5050e8"/><rect x="343" y="129" width="5" height="1" fill="#e05050"/><rect x="349" y="129" width="5" height="1" fill="#5050e8"/><rect x="343" y="131" width="5" height="1" fill="#e05050"/><rect x="349" y="131" width="5" height="1" fill="#5050e8"/><rect x="343" y="133" width="5" height="1" fill="#e05050"/><rect x="349" y="133" width="5" height="1" fill="#5050e8"/><path d="M358 124 h4 v4 h3 v7 h-7 z" fill="#2828f0"/><path d="M373 124 h-4 v4 h-3 v7 h7 z" fill="#d02a2a"/><rect x="362.5" y="124" width="6.5" height="3" fill="#d8d8d8"/><rect x="365" y="127" width="1.2" height="8" fill="#c8c8c8"/></svg>
<div class="t" style="left:1318.5px;top:164.53px;font-size:10px;color:#fff;transform:scaleX(0.87);transform-origin:0 0;">1.22125</div>
<div class="t" style="left:1318.5px;top:196.53px;font-size:10px;color:#fff;transform:scaleX(0.87);transform-origin:0 0;">1.22090</div>
<div class="t" style="left:1318.5px;top:228.53px;font-size:10px;color:#fff;transform:scaleX(0.87);transform-origin:0 0;">1.22055</div>
<div class="t" style="left:1318.5px;top:260.54px;font-size:10px;color:#fff;transform:scaleX(0.87);transform-origin:0 0;">1.22020</div>
<div class="t" style="left:1318.5px;top:291.54px;font-size:10px;color:#fff;transform:scaleX(0.87);transform-origin:0 0;">1.21985</div>
<div class="t" style="left:1318.5px;top:323.54px;font-size:10px;color:#fff;transform:scaleX(0.87);transform-origin:0 0;">1.21950</div>
<div class="t" style="left:1318.5px;top:355.54px;font-size:10px;color:#fff;transform:scaleX(0.87);transform-origin:0 0;">1.21915</div>
<div class="t" style="left:1318.5px;top:133.53px;font-size:10px;color:#000;transform:scaleX(0.87);transform-origin:0 0;">1.22159</div>
<div class="t" style="left:337px;top:396.61px;font-size:10.5px;color:#fff;transform:scaleX(0.86);transform-origin:0 0;">9 Jun 2021</div>
<div class="t" style="left:401px;top:396.61px;font-size:10.5px;color:#fff;transform:scaleX(0.86);transform-origin:0 0;">9 Jun 13:39</div>
<div class="t" style="left:465px;top:396.61px;font-size:10.5px;color:#fff;transform:scaleX(0.86);transform-origin:0 0;">9 Jun 13:47</div>
<div class="t" style="left:529px;top:396.61px;font-size:10.5px;color:#fff;transform:scaleX(0.86);transform-origin:0 0;">9 Jun 13:55</div>
<div class="t" style="left:593px;top:396.61px;font-size:10.5px;color:#fff;transform:scaleX(0.86);transform-origin:0 0;">9 Jun 14:03</div>
<div class="t" style="left:657px;top:396.61px;font-size:10.5px;color:#fff;transform:scaleX(0.86);transform-origin:0 0;">9 Jun 14:11</div>
<div class="t" style="left:721px;top:396.61px;font-size:10.5px;color:#fff;transform:scaleX(0.86);transform-origin:0 0;">9 Jun 14:19</div>
<div class="t" style="left:785px;top:396.61px;font-size:10.5px;color:#fff;transform:scaleX(0.86);transform-origin:0 0;">9 Jun 14:27</div>
<div class="t" style="left:849px;top:396.61px;font-size:10.5px;color:#fff;transform:scaleX(0.86);transform-origin:0 0;">9 Jun 14:35</div>
<div class="t" style="left:913px;top:396.61px;font-size:10.5px;color:#fff;transform:scaleX(0.86);transform-origin:0 0;">9 Jun 14:43</div>
<div class="t" style="left:977px;top:396.61px;font-size:10.5px;color:#fff;transform:scaleX(0.86);transform-origin:0 0;">9 Jun 14:51</div>
<div class="t" style="left:1041px;top:396.61px;font-size:10.5px;color:#fff;transform:scaleX(0.86);transform-origin:0 0;">9 Jun 14:59</div>
<div class="t" style="left:1105px;top:396.61px;font-size:10.5px;color:#fff;transform:scaleX(0.86);transform-origin:0 0;">9 Jun 15:07</div>
<div class="t" style="left:1169px;top:396.61px;font-size:10.5px;color:#fff;transform:scaleX(0.86);transform-origin:0 0;">9 Jun 15:15</div>
<div class="t" style="left:1233px;top:396.61px;font-size:10.5px;color:#fff;transform:scaleX(0.86);transform-origin:0 0;">9 Jun 15:23</div>
<div class="t" style="left:1297px;top:396.61px;font-size:10.5px;color:#fff;transform:scaleX(0.86);transform-origin:0 0;">9 Jun 15:31</div>
<div class="r" style="left:334px;top:413px;width:1033px;height:21px;background:#f0f0f0;"></div>
<div class="r" style="left:334px;top:413px;width:1033px;height:1px;background:#fff;"></div>
<div class="r" style="left:334px;top:415px;width:1033px;height:1px;background:#000;"></div>
<div class="t" style="left:348.5px;top:418.34px;font-size:12px;color:#6d6d6d;transform:scaleX(0.92);transform-origin:0 0;">Bra50,M1</div>
<div class="r" style="left:409px;top:418px;width:1px;height:13px;background:#808080;"></div>
<div class="t" style="left:420px;top:418.34px;font-size:12px;color:#6d6d6d;transform:scaleX(0.92);transform-origin:0 0;">Bra50,H1</div>
<div class="r" style="left:479px;top:414px;width:84px;height:20px;background:#fff;border:1px solid #000;border-top:none"></div>
<div class="t" style="left:489.5px;top:418.34px;font-size:12px;color:#000;transform:scaleX(0.88);transform-origin:0 0;">EURUSD,M1</div>
<svg class="r" style="left:1325px;top:419px" width="32" height="12" viewBox="0 0 32 12"><path d="M8 2 L3.5 6 L8 10 Z" fill="#a0a0a0"/><path d="M24 2 L28.5 6 L24 10 Z" fill="#a0a0a0"/></svg>
<div class="r" style="left:3px;top:434px;width:1363px;height:1px;background:#a0a0a0;"></div>
<div class="r" style="left:3px;top:435px;width:1363px;height:1px;background:#fff;"></div>
<div class="r" style="left:4px;top:453px;width:13px;height:258px;background:#d2dfec;"></div>
<svg class="r" style="left:6px;top:440.5px" width="8" height="8" viewBox="0 0 8 8"><path d="M1.2 1.2 L6.8 6.8 M6.8 1.2 L1.2 6.8" stroke="#000" stroke-width="1.8"/></svg>
<div class="t" style="left:5px;top:708px;font-size:10.8px;color:#000;transform-origin:0 0;transform:rotate(-90deg);width:120px;line-height:13px">Caixa de Ferramentas</div>
<div class="r" style="left:18px;top:439px;width:1345px;height:245px;background:#fff;border:1px solid #a0a0a0;border-bottom:none;border-right:none"></div>
<div class="r" style="left:177px;top:440px;width:1px;height:24px;background:#e8e8e8;"></div>
<div class="r" style="left:287px;top:440px;width:1px;height:24px;background:#e8e8e8;"></div>
<div class="r" style="left:427px;top:440px;width:1px;height:24px;background:#e8e8e8;"></div>
<div class="r" style="left:549px;top:440px;width:1px;height:24px;background:#e8e8e8;"></div>
<div class="r" style="left:671px;top:440px;width:1px;height:24px;background:#e8e8e8;"></div>
<div class="r" style="left:793px;top:440px;width:1px;height:24px;background:#e8e8e8;"></div>
<div class="r" style="left:915px;top:440px;width:1px;height:24px;background:#e8e8e8;"></div>
<div class="r" style="left:1037px;top:440px;width:1px;height:24px;background:#e8e8e8;"></div>
<div class="r" style="left:1159px;top:440px;width:1px;height:24px;background:#e8e8e8;"></div>
<div class="t" style="left:25px;top:445.84px;font-size:12px;color:#000;transform:scaleX(0.93);transform-origin:0 0;">Ativo</div>
<div class="t" style="left:182px;top:445.84px;font-size:12px;color:#000;transform:scaleX(0.93);transform-origin:0 0;">Bilhete</div>
<div class="t" style="left:22px;width:400px;text-align:right;top:445.84px;font-size:12px;color:#000;transform:scaleX(0.93);transform-origin:100% 0;">Horário</div>
<div class="t" style="left:144px;width:400px;text-align:right;top:445.84px;font-size:12px;color:#000;transform:scaleX(0.93);transform-origin:100% 0;">Tipo</div>
<div class="t" style="left:266px;width:400px;text-align:right;top:445.84px;font-size:12px;color:#000;transform:scaleX(0.93);transform-origin:100% 0;">Volume</div>
<div class="t" style="left:388px;width:400px;text-align:right;top:445.84px;font-size:12px;color:#000;transform:scaleX(0.93);transform-origin:100% 0;">Preço</div>
<div class="t" style="left:510px;width:400px;text-align:right;top:445.84px;font-size:12px;color:#000;transform:scaleX(0.93);transform-origin:100% 0;">S / L</div>
<div class="t" style="left:632px;width:400px;text-align:right;top:445.84px;font-size:12px;color:#000;transform:scaleX(0.93);transform-origin:100% 0;">T / P</div>
<div class="t" style="left:754px;width:400px;text-align:right;top:445.84px;font-size:12px;color:#000;transform:scaleX(0.93);transform-origin:100% 0;">Preço</div>
<div class="t" style="left:940px;width:400px;text-align:right;top:445.84px;font-size:12px;color:#000;transform:scaleX(0.93);transform-origin:100% 0;">Lucro</div>
<svg class="r" style="left:66px;top:447px" width="10" height="6" viewBox="0 0 10 6"><path d="M0.5 5.5 L4.5 1 L8.5 5.5 Z" fill="#303030"/></svg>
<div class="r" style="left:19px;top:464px;width:1326px;height:20px;background:#ebebeb;"></div>
<div class="r" style="left:19px;top:483px;width:1326px;height:1px;background:#d4d4d4;"></div>
<div class="r" style="left:177px;top:464px;width:1px;height:20px;background:#d4d4d4;"></div>
<div class="r" style="left:287px;top:464px;width:1px;height:20px;background:#d4d4d4;"></div>
<div class="r" style="left:427px;top:464px;width:1px;height:20px;background:#d4d4d4;"></div>
<div class="r" style="left:549px;top:464px;width:1px;height:20px;background:#d4d4d4;"></div>
<div class="r" style="left:671px;top:464px;width:1px;height:20px;background:#d4d4d4;"></div>
<div class="r" style="left:793px;top:464px;width:1px;height:20px;background:#d4d4d4;"></div>
<div class="r" style="left:915px;top:464px;width:1px;height:20px;background:#d4d4d4;"></div>
<div class="r" style="left:1037px;top:464px;width:1px;height:20px;background:#d4d4d4;"></div>
<div class="r" style="left:1159px;top:464px;width:1px;height:20px;background:#d4d4d4;"></div>
<svg class="r" style="left:20px;top:465px" width="14" height="18" viewBox="0 0 14 18"><defs><linearGradient id="g0" x1="0" y1="0" x2="0" y2="1"><stop offset="0" stop-color="#dceaf8"/><stop offset="1" stop-color="#a8ccf4"/></linearGradient></defs><path d="M1.6 2.6 Q1.6 1.1 3.1 1.1 H10.9 Q12.4 1.1 12.4 2.6 V12 L8.2 16.3 H3.1 Q1.6 16.3 1.6 14.8 Z" fill="url(#g0)" stroke="#3a88d8" stroke-width="1.2"/><path d="M4 5 h6 M4 7.5 h6" stroke="#3a88d8" stroke-width="1.1"/><path d="M8.2 16.3 V13 Q8.2 12 9.2 12 H12.4 Z" fill="#3a88d8"/></svg>
<div class="t" style="left:40px;top:467.84px;font-size:12px;color:#000;transform:scaleX(0.93);transform-origin:0 0;">bra50</div>
<div class="t" style="left:182px;top:467.84px;font-size:12px;color:#000;transform:scaleX(0.88);transform-origin:0 0;">199873277</div>
<div class="t" style="left:24px;width:400px;text-align:right;top:467.84px;font-size:12px;color:#000;transform:scaleX(0.9);transform-origin:100% 0;">2021.06.08 15:00:25</div>
<div class="t" style="left:146px;width:400px;text-align:right;top:467.84px;font-size:12px;color:#000;transform:scaleX(0.93);transform-origin:100% 0;">buy</div>
<div class="t" style="left:268px;width:400px;text-align:right;top:467.84px;font-size:12px;color:#000;transform:scaleX(0.9);transform-origin:100% 0;">1.16</div>
<div class="t" style="left:390px;width:400px;text-align:right;top:467.84px;font-size:12px;color:#000;transform:scaleX(0.88);transform-origin:100% 0;">130650</div>
<div class="t" style="left:755px;width:400px;text-align:right;top:467.84px;font-size:12px;color:#000;transform:scaleX(0.88);transform-origin:100% 0;">129760</div>
<div class="t" style="left:925px;width:400px;text-align:right;top:467.84px;font-size:12px;color:#ff0000;transform:scaleX(0.9);transform-origin:100% 0;">-41.08</div>
<svg class="r" style="left:1332px;top:470px" width="9" height="9" viewBox="0 0 9 9"><path d="M1 1 L8 8 M8 1 L1 8" stroke="#808080" stroke-width="1.6"/></svg>
<div class="r" style="left:19px;top:484px;width:1326px;height:20px;background:#fff;"></div>
<div class="r" style="left:19px;top:503px;width:1326px;height:1px;background:#d4d4d4;"></div>
<div class="r" style="left:177px;top:484px;width:1px;height:20px;background:#d4d4d4;"></div>
<div class="r" style="left:287px;top:484px;width:1px;height:20px;background:#d4d4d4;"></div>
<div class="r" style="left:427px;top:484px;width:1px;height:20px;background:#d4d4d4;"></div>
<div class="r" style="left:549px;top:484px;width:1px;height:20px;background:#d4d4d4;"></div>
<div class="r" style="left:671px;top:484px;width:1px;height:20px;background:#d4d4d4;"></div>
<div class="r" style="left:793px;top:484px;width:1px;height:20px;background:#d4d4d4;"></div>
<div class="r" style="left:915px;top:484px;width:1px;height:20px;background:#d4d4d4;"></div>
<div class="r" style="left:1037px;top:484px;width:1px;height:20px;background:#d4d4d4;"></div>
<div class="r" style="left:1159px;top:484px;width:1px;height:20px;background:#d4d4d4;"></div>
<svg class="r" style="left:20px;top:485px" width="14" height="18" viewBox="0 0 14 18"><defs><linearGradient id="g1" x1="0" y1="0" x2="0" y2="1"><stop offset="0" stop-color="#dceaf8"/><stop offset="1" stop-color="#a8ccf4"/></linearGradient></defs><path d="M1.6 2.6 Q1.6 1.1 3.1 1.1 H10.9 Q12.4 1.1 12.4 2.6 V12 L8.2 16.3 H3.1 Q1.6 16.3 1.6 14.8 Z" fill="url(#g1)" stroke="#3a88d8" stroke-width="1.2"/><path d="M4 5 h6 M4 7.5 h6" stroke="#3a88d8" stroke-width="1.1"/><path d="M8.2 16.3 V13 Q8.2 12 9.2 12 H12.4 Z" fill="#3a88d8"/></svg>
<div class="t" style="left:40px;top:487.84px;font-size:12px;color:#000;transform:scaleX(0.93);transform-origin:0 0;">bra50</div>
<div class="t" style="left:182px;top:487.84px;font-size:12px;color:#000;transform:scaleX(0.88);transform-origin:0 0;">199877358</div>
<div class="t" style="left:24px;width:400px;text-align:right;top:487.84px;font-size:12px;color:#000;transform:scaleX(0.9);transform-origin:100% 0;">2021.06.08 15:01:23</div>
<div class="t" style="left:146px;width:400px;text-align:right;top:487.84px;font-size:12px;color:#000;transform:scaleX(0.93);transform-origin:100% 0;">buy</div>
<div class="t" style="left:268px;width:400px;text-align:right;top:487.84px;font-size:12px;color:#000;transform:scaleX(0.9);transform-origin:100% 0;">1.22</div>
<div class="t" style="left:390px;width:400px;text-align:right;top:487.84px;font-size:12px;color:#000;transform:scaleX(0.88);transform-origin:100% 0;">130620</div>
<div class="t" style="left:755px;width:400px;text-align:right;top:487.84px;font-size:12px;color:#000;transform:scaleX(0.88);transform-origin:100% 0;">129760</div>
<div class="t" style="left:925px;width:400px;text-align:right;top:487.84px;font-size:12px;color:#ff0000;transform:scaleX(0.9);transform-origin:100% 0;">-41.74</div>
<svg class="r" style="left:1332px;top:490px" width="9" height="9" viewBox="0 0 9 9"><path d="M1 1 L8 8 M8 1 L1 8" stroke="#808080" stroke-width="1.6"/></svg>
<div class="r" style="left:19px;top:504px;width:1326px;height:20px;background:#ebebeb;"></div>
<div class="r" style="left:19px;top:523px;width:1326px;height:1px;background:#d4d4d4;"></div>
<div class="r" style="left:177px;top:504px;width:1px;height:20px;background:#d4d4d4;"></div>
<div class="r" style="left:287px;top:504px;width:1px;height:20px;background:#d4d4d4;"></div>
<div class="r" style="left:427px;top:504px;width:1px;height:20px;background:#d4d4d4;"></div>
<div class="r" style="left:549px;top:504px;width:1px;height:20px;background:#d4d4d4;"></div>
<div class="r" style="left:671px;top:504px;width:1px;height:20px;background:#d4d4d4;"></div>
<div class="r" style="left:793px;top:504px;width:1px;height:20px;background:#d4d4d4;"></div>
<div class="r" style="left:915px;top:504px;width:1px;height:20px;background:#d4d4d4;"></div>
<div class="r" style="left:1037px;top:504px;width:1px;height:20px;background:#d4d4d4;"></div>
<div class="r" style="left:1159px;top:504px;width:1px;height:20px;background:#d4d4d4;"></div>
<svg class="r" style="left:20px;top:505px" width="14" height="18" viewBox="0 0 14 18"><defs><linearGradient id="g2" x1="0" y1="0" x2="0" y2="1"><stop offset="0" stop-color="#dceaf8"/><stop offset="1" stop-color="#a8ccf4"/></linearGradient></defs><path d="M1.6 2.6 Q1.6 1.1 3.1 1.1 H10.9 Q12.4 1.1 12.4 2.6 V12 L8.2 16.3 H3.1 Q1.6 16.3 1.6 14.8 Z" fill="url(#g2)" stroke="#3a88d8" stroke-width="1.2"/><path d="M4 5 h6 M4 7.5 h6" stroke="#3a88d8" stroke-width="1.1"/><path d="M8.2 16.3 V13 Q8.2 12 9.2 12 H12.4 Z" fill="#3a88d8"/></svg>
<div class="t" style="left:40px;top:507.84px;font-size:12px;color:#000;transform:scaleX(0.93);transform-origin:0 0;">bra50</div>
<div class="t" style="left:182px;top:507.84px;font-size:12px;color:#000;transform:scaleX(0.88);transform-origin:0 0;">199879157</div>
<div class="t" style="left:24px;width:400px;text-align:right;top:507.84px;font-size:12px;color:#000;transform:scaleX(0.9);transform-origin:100% 0;">2021.06.08 15:02:02</div>
<div class="t" style="left:146px;width:400px;text-align:right;top:507.84px;font-size:12px;color:#000;transform:scaleX(0.93);transform-origin:100% 0;">buy</div>
<div class="t" style="left:268px;width:400px;text-align:right;top:507.84px;font-size:12px;color:#000;transform:scaleX(0.9);transform-origin:100% 0;">1.28</div>
<div class="t" style="left:390px;width:400px;text-align:right;top:507.84px;font-size:12px;color:#000;transform:scaleX(0.88);transform-origin:100% 0;">130595</div>
<div class="t" style="left:755px;width:400px;text-align:right;top:507.84px;font-size:12px;color:#000;transform:scaleX(0.88);transform-origin:100% 0;">129760</div>
<div class="t" style="left:925px;width:400px;text-align:right;top:507.84px;font-size:12px;color:#ff0000;transform:scaleX(0.9);transform-origin:100% 0;">-42.52</div>
<svg class="r" style="left:1332px;top:510px" width="9" height="9" viewBox="0 0 9 9"><path d="M1 1 L8 8 M8 1 L1 8" stroke="#808080" stroke-width="1.6"/></svg>
<div class="r" style="left:19px;top:524px;width:1326px;height:20px;background:#fff;"></div>
<div class="r" style="left:19px;top:543px;width:1326px;height:1px;background:#d4d4d4;"></div>
<div class="r" style="left:177px;top:524px;width:1px;height:20px;background:#d4d4d4;"></div>
<div class="r" style="left:287px;top:524px;width:1px;height:20px;background:#d4d4d4;"></div>
<div class="r" style="left:427px;top:524px;width:1px;height:20px;background:#d4d4d4;"></div>
<div class="r" style="left:549px;top:524px;width:1px;height:20px;background:#d4d4d4;"></div>
<div class="r" style="left:671px;top:524px;width:1px;height:20px;background:#d4d4d4;"></div>
<div class="r" style="left:793px;top:524px;width:1px;height:20px;background:#d4d4d4;"></div>
<div class="r" style="left:915px;top:524px;width:1px;height:20px;background:#d4d4d4;"></div>
<div class="r" style="left:1037px;top:524px;width:1px;height:20px;background:#d4d4d4;"></div>
<div class="r" style="left:1159px;top:524px;width:1px;height:20px;background:#d4d4d4;"></div>
<svg class="r" style="left:20px;top:525px" width="14" height="18" viewBox="0 0 14 18"><defs><linearGradient id="g3" x1="0" y1="0" x2="0" y2="1"><stop offset="0" stop-color="#dceaf8"/><stop offset="1" stop-color="#a8ccf4"/></linearGradient></defs><path d="M1.6 2.6 Q1.6 1.1 3.1 1.1 H10.9 Q12.4 1.1 12.4 2.6 V12 L8.2 16.3 H3.1 Q1.6 16.3 1.6 14.8 Z" fill="url(#g3)" stroke="#3a88d8" stroke-width="1.2"/><path d="M4 5 h6 M4 7.5 h6" stroke="#3a88d8" stroke-width="1.1"/><path d="M8.2 16.3 V13 Q8.2 12 9.2 12 H12.4 Z" fill="#3a88d8"/></svg>
<div class="t" style="left:40px;top:527.84px;font-size:12px;color:#000;transform:scaleX(0.93);transform-origin:0 0;">bra50</div>
<div class="t" style="left:182px;top:527.84px;font-size:12px;color:#000;transform:scaleX(0.88);transform-origin:0 0;">199881403</div>
<div class="t" style="left:24px;width:400px;text-align:right;top:527.84px;font-size:12px;color:#000;transform:scaleX(0.9);transform-origin:100% 0;">2021.06.08 15:02:07</div>
<div class="t" style="left:146px;width:400px;text-align:right;top:527.84px;font-size:12px;color:#000;transform:scaleX(0.93);transform-origin:100% 0;">buy</div>
<div class="t" style="left:268px;width:400px;text-align:right;top:527.84px;font-size:12px;color:#000;transform:scaleX(0.9);transform-origin:100% 0;">1.34</div>
<div class="t" style="left:390px;width:400px;text-align:right;top:527.84px;font-size:12px;color:#000;transform:scaleX(0.88);transform-origin:100% 0;">130530</div>
<div class="t" style="left:755px;width:400px;text-align:right;top:527.84px;font-size:12px;color:#000;transform:scaleX(0.88);transform-origin:100% 0;">129760</div>
<div class="t" style="left:925px;width:400px;text-align:right;top:527.84px;font-size:12px;color:#ff0000;transform:scaleX(0.9);transform-origin:100% 0;">-41.05</div>
<svg class="r" style="left:1332px;top:530px" width="9" height="9" viewBox="0 0 9 9"><path d="M1 1 L8 8 M8 1 L1 8" stroke="#808080" stroke-width="1.6"/></svg>
<div class="r" style="left:19px;top:544px;width:1326px;height:20px;background:#ebebeb;"></div>
<div class="r" style="left:19px;top:563px;width:1326px;height:1px;background:#d4d4d4;"></div>
<div class="r" style="left:177px;top:544px;width:1px;height:20px;background:#d4d4d4;"></div>
<div class="r" style="left:287px;top:544px;width:1px;height:20px;background:#d4d4d4;"></div>
<div class="r" style="left:427px;top:544px;width:1px;height:20px;background:#d4d4d4;"></div>
<div class="r" style="left:549px;top:544px;width:1px;height:20px;background:#d4d4d4;"></div>
<div class="r" style="left:671px;top:544px;width:1px;height:20px;background:#d4d4d4;"></div>
<div class="r" style="left:793px;top:544px;width:1px;height:20px;background:#d4d4d4;"></div>
<div class="r" style="left:915px;top:544px;width:1px;height:20px;background:#d4d4d4;"></div>
<div class="r" style="left:1037px;top:544px;width:1px;height:20px;background:#d4d4d4;"></div>
<div class="r" style="left:1159px;top:544px;width:1px;height:20px;background:#d4d4d4;"></div>
<svg class="r" style="left:20px;top:545px" width="14" height="18" viewBox="0 0 14 18"><defs><linearGradient id="g4" x1="0" y1="0" x2="0" y2="1"><stop offset="0" stop-color="#dceaf8"/><stop offset="1" stop-color="#a8ccf4"/></linearGradient></defs><path d="M1.6 2.6 Q1.6 1.1 3.1 1.1 H10.9 Q12.4 1.1 12.4 2.6 V12 L8.2 16.3 H3.1 Q1.6 16.3 1.6 14.8 Z" fill="url(#g4)" stroke="#3a88d8" stroke-width="1.2"/><path d="M4 5 h6 M4 7.5 h6" stroke="#3a88d8" stroke-width="1.1"/><path d="M8.2 16.3 V13 Q8.2 12 9.2 12 H12.4 Z" fill="#3a88d8"/></svg>
<div class="t" style="left:40px;top:547.84px;font-size:12px;color:#000;transform:scaleX(0.93);transform-origin:0 0;">bra50</div>
<div class="t" style="left:182px;top:547.84px;font-size:12px;color:#000;transform:scaleX(0.88);transform-origin:0 0;">199892621</div>
<div class="t" style="left:24px;width:400px;text-align:right;top:547.84px;font-size:12px;color:#000;transform:scaleX(0.9);transform-origin:100% 0;">2021.06.08 15:06:00</div>
<div class="t" style="left:146px;width:400px;text-align:right;top:547.84px;font-size:12px;color:#000;transform:scaleX(0.93);transform-origin:100% 0;">buy</div>
<div class="t" style="left:268px;width:400px;text-align:right;top:547.84px;font-size:12px;color:#000;transform:scaleX(0.9);transform-origin:100% 0;">1.4</div>
<div class="t" style="left:390px;width:400px;text-align:right;top:547.84px;font-size:12px;color:#000;transform:scaleX(0.88);transform-origin:100% 0;">130385</div>
<div class="t" style="left:755px;width:400px;text-align:right;top:547.84px;font-size:12px;color:#000;transform:scaleX(0.88);transform-origin:100% 0;">129760</div>
<div class="t" style="left:925px;width:400px;text-align:right;top:547.84px;font-size:12px;color:#ff0000;transform:scaleX(0.9);transform-origin:100% 0;">-34.81</div>
<svg class="r" style="left:1332px;top:550px" width="9" height="9" viewBox="0 0 9 9"><path d="M1 1 L8 8 M8 1 L1 8" stroke="#808080" stroke-width="1.6"/></svg>
<div class="r" style="left:19px;top:564px;width:1326px;height:20px;background:#fff;"></div>
<div class="r" style="left:19px;top:583px;width:1326px;height:1px;background:#d4d4d4;"></div>
<div class="r" style="left:177px;top:564px;width:1px;height:20px;background:#d4d4d4;"></div>
<div class="r" style="left:287px;top:564px;width:1px;height:20px;background:#d4d4d4;"></div>
<div class="r" style="left:427px;top:564px;width:1px;height:20px;background:#d4d4d4;"></div>
<div class="r" style="left:549px;top:564px;width:1px;height:20px;background:#d4d4d4;"></div>
<div class="r" style="left:671px;top:564px;width:1px;height:20px;background:#d4d4d4;"></div>
<div class="r" style="left:793px;top:564px;width:1px;height:20px;background:#d4d4d4;"></div>
<div class="r" style="left:915px;top:564px;width:1px;height:20px;background:#d4d4d4;"></div>
<div class="r" style="left:1037px;top:564px;width:1px;height:20px;background:#d4d4d4;"></div>
<div class="r" style="left:1159px;top:564px;width:1px;height:20px;background:#d4d4d4;"></div>
<svg class="r" style="left:20px;top:565px" width="14" height="18" viewBox="0 0 14 18"><defs><linearGradient id="g5" x1="0" y1="0" x2="0" y2="1"><stop offset="0" stop-color="#dceaf8"/><stop offset="1" stop-color="#a8ccf4"/></linearGradient></defs><path d="M1.6 2.6 Q1.6 1.1 3.1 1.1 H10.9 Q12.4 1.1 12.4 2.6 V12 L8.2 16.3 H3.1 Q1.6 16.3 1.6 14.8 Z" fill="url(#g5)" stroke="#3a88d8" stroke-width="1.2"/><path d="M4 5 h6 M4 7.5 h6" stroke="#3a88d8" stroke-width="1.1"/><path d="M8.2 16.3 V13 Q8.2 12 9.2 12 H12.4 Z" fill="#3a88d8"/></svg>
<div class="t" style="left:40px;top:567.84px;font-size:12px;color:#000;transform:scaleX(0.93);transform-origin:0 0;">bra50</div>
<div class="t" style="left:182px;top:567.84px;font-size:12px;color:#000;transform:scaleX(0.88);transform-origin:0 0;">199961306</div>
<div class="t" style="left:24px;width:400px;text-align:right;top:567.84px;font-size:12px;color:#000;transform:scaleX(0.9);transform-origin:100% 0;">2021.06.08 15:47:00</div>
<div class="t" style="left:146px;width:400px;text-align:right;top:567.84px;font-size:12px;color:#000;transform:scaleX(0.93);transform-origin:100% 0;">buy</div>
<div class="t" style="left:268px;width:400px;text-align:right;top:567.84px;font-size:12px;color:#000;transform:scaleX(0.9);transform-origin:100% 0;">1.46</div>
<div class="t" style="left:390px;width:400px;text-align:right;top:567.84px;font-size:12px;color:#000;transform:scaleX(0.88);transform-origin:100% 0;">130290</div>
<div class="t" style="left:755px;width:400px;text-align:right;top:567.84px;font-size:12px;color:#000;transform:scaleX(0.88);transform-origin:100% 0;">129760</div>
<div class="t" style="left:925px;width:400px;text-align:right;top:567.84px;font-size:12px;color:#ff0000;transform:scaleX(0.9);transform-origin:100% 0;">-30.79</div>
<svg class="r" style="left:1332px;top:570px" width="9" height="9" viewBox="0 0 9 9"><path d="M1 1 L8 8 M8 1 L1 8" stroke="#808080" stroke-width="1.6"/></svg>
<div class="r" style="left:19px;top:584px;width:1326px;height:20px;background:#ebebeb;"></div>
<div class="r" style="left:19px;top:603px;width:1326px;height:1px;background:#d4d4d4;"></div>
<div class="r" style="left:177px;top:584px;width:1px;height:20px;background:#d4d4d4;"></div>
<div class="r" style="left:287px;top:584px;width:1px;height:20px;background:#d4d4d4;"></div>
<div class="r" style="left:427px;top:584px;width:1px;height:20px;background:#d4d4d4;"></div>
<div class="r" style="left:549px;top:584px;width:1px;height:20px;background:#d4d4d4;"></div>
<div class="r" style="left:671px;top:584px;width:1px;height:20px;background:#d4d4d4;"></div>
<div class="r" style="left:793px;top:584px;width:1px;height:20px;background:#d4d4d4;"></div>
<div class="r" style="left:915px;top:584px;width:1px;height:20px;background:#d4d4d4;"></div>
<div class="r" style="left:1037px;top:584px;width:1px;height:20px;background:#d4d4d4;"></div>
<div class="r" style="left:1159px;top:584px;width:1px;height:20px;background:#d4d4d4;"></div>
<svg class="r" style="left:20px;top:585px" width="14" height="18" viewBox="0 0 14 18"><defs><linearGradient id="g6" x1="0" y1="0" x2="0" y2="1"><stop offset="0" stop-color="#dceaf8"/><stop offset="1" stop-color="#a8ccf4"/></linearGradient></defs><path d="M1.6 2.6 Q1.6 1.1 3.1 1.1 H10.9 Q12.4 1.1 12.4 2.6 V12 L8.2 16.3 H3.1 Q1.6 16.3 1.6 14.8 Z" fill="url(#g6)" stroke="#3a88d8" stroke-width="1.2"/><path d="M4 5 h6 M4 7.5 h6" stroke="#3a88d8" stroke-width="1.1"/><path d="M8.2 16.3 V13 Q8.2 12 9.2 12 H12.4 Z" fill="#3a88d8"/></svg>
<div class="t" style="left:40px;top:587.84px;font-size:12px;color:#000;transform:scaleX(0.93);transform-origin:0 0;">bra50</div>
<div class="t" style="left:182px;top:587.84px;font-size:12px;color:#000;transform:scaleX(0.88);transform-origin:0 0;">199965469</div>
<div class="t" style="left:24px;width:400px;text-align:right;top:587.84px;font-size:12px;color:#000;transform:scaleX(0.9);transform-origin:100% 0;">2021.06.08 15:48:00</div>
<div class="t" style="left:146px;width:400px;text-align:right;top:587.84px;font-size:12px;color:#000;transform:scaleX(0.93);transform-origin:100% 0;">buy</div>
<div class="t" style="left:268px;width:400px;text-align:right;top:587.84px;font-size:12px;color:#000;transform:scaleX(0.9);transform-origin:100% 0;">1.52</div>
<div class="t" style="left:390px;width:400px;text-align:right;top:587.84px;font-size:12px;color:#000;transform:scaleX(0.88);transform-origin:100% 0;">130115</div>
<div class="t" style="left:755px;width:400px;text-align:right;top:587.84px;font-size:12px;color:#000;transform:scaleX(0.88);transform-origin:100% 0;">129760</div>
<div class="t" style="left:925px;width:400px;text-align:right;top:587.84px;font-size:12px;color:#ff0000;transform:scaleX(0.9);transform-origin:100% 0;">-21.47</div>
<svg class="r" style="left:1332px;top:590px" width="9" height="9" viewBox="0 0 9 9"><path d="M1 1 L8 8 M8 1 L1 8" stroke="#808080" stroke-width="1.6"/></svg>
<div class="r" style="left:19px;top:604px;width:1326px;height:20px;background:#fff;"></div>
<div class="r" style="left:19px;top:623px;width:1326px;height:1px;background:#d4d4d4;"></div>
<div class="r" style="left:177px;top:604px;width:1px;height:20px;background:#d4d4d4;"></div>
<div class="r" style="left:287px;top:604px;width:1px;height:20px;background:#d4d4d4;"></div>
<div class="r" style="left:427px;top:604px;width:1px;height:20px;background:#d4d4d4;"></div>
<div class="r" style="left:549px;top:604px;width:1px;height:20px;background:#d4d4d4;"></div>
<div class="r" style="left:671px;top:604px;width:1px;height:20px;background:#d4d4d4;"></div>
<div class="r" style="left:793px;top:604px;width:1px;height:20px;background:#d4d4d4;"></div>
<div class="r" style="left:915px;top:604px;width:1px;height:20px;background:#d4d4d4;"></div>
<div class="r" style="left:1037px;top:604px;width:1px;height:20px;background:#d4d4d4;"></div>
<div class="r" style="left:1159px;top:604px;width:1px;height:20px;background:#d4d4d4;"></div>
<svg class="r" style="left:20px;top:605px" width="14" height="18" viewBox="0 0 14 18"><defs><linearGradient id="g7" x1="0" y1="0" x2="0" y2="1"><stop offset="0" stop-color="#fbe2d8"/><stop offset="1" stop-color="#f8b8a0"/></linearGradient></defs><path d="M1.6 2.6 Q1.6 1.1 3.1 1.1 H10.9 Q12.4 1.1 12.4 2.6 V12 L8.2 16.3 H3.1 Q1.6 16.3 1.6 14.8 Z" fill="url(#g7)" stroke="#e8602a" stroke-width="1.2"/><path d="M4 5 h6 M4 7.5 h6" stroke="#e8602a" stroke-width="1.1"/><path d="M8.2 16.3 V13 Q8.2 12 9.2 12 H12.4 Z" fill="#e8602a"/></svg>
<div class="t" style="left:40px;top:607.84px;font-size:12px;color:#000;transform:scaleX(0.93);transform-origin:0 0;">bra50</div>
<div class="t" style="left:182px;top:607.84px;font-size:12px;color:#000;transform:scaleX(0.88);transform-origin:0 0;">400194689</div>
<div class="t" style="left:24px;width:400px;text-align:right;top:607.84px;font-size:12px;color:#000;transform:scaleX(0.9);transform-origin:100% 0;">2021.06.08 20:26:33</div>
<div class="t" style="left:146px;width:400px;text-align:right;top:607.84px;font-size:12px;color:#000;transform:scaleX(0.93);transform-origin:100% 0;">sell</div>
<div class="t" style="left:268px;width:400px;text-align:right;top:607.84px;font-size:12px;color:#000;transform:scaleX(0.9);transform-origin:100% 0;">6</div>
<div class="t" style="left:390px;width:400px;text-align:right;top:607.84px;font-size:12px;color:#000;transform:scaleX(0.88);transform-origin:100% 0;">129295</div>
<div class="t" style="left:755px;width:400px;text-align:right;top:607.84px;font-size:12px;color:#000;transform:scaleX(0.88);transform-origin:100% 0;">129775</div>
<div class="t" style="left:925px;width:400px;text-align:right;top:607.84px;font-size:12px;color:#ff0000;transform:scaleX(0.9);transform-origin:100% 0;">-114.58</div>
<svg class="r" style="left:1332px;top:610px" width="9" height="9" viewBox="0 0 9 9"><path d="M1 1 L8 8 M8 1 L1 8" stroke="#808080" stroke-width="1.6"/></svg>
<div class="r" style="left:19px;top:624px;width:1326px;height:20px;background:#ebebeb;"></div>
<div class="r" style="left:19px;top:643px;width:1326px;height:1px;background:#d4d4d4;"></div>
<div class="r" style="left:177px;top:624px;width:1px;height:20px;background:#d4d4d4;"></div>
<div class="r" style="left:287px;top:624px;width:1px;height:20px;background:#d4d4d4;"></div>
<div class="r" style="left:427px;top:624px;width:1px;height:20px;background:#d4d4d4;"></div>
<div class="r" style="left:549px;top:624px;width:1px;height:20px;background:#d4d4d4;"></div>
<div class="r" style="left:671px;top:624px;width:1px;height:20px;background:#d4d4d4;"></div>
<div class="r" style="left:793px;top:624px;width:1px;height:20px;background:#d4d4d4;"></div>
<div class="r" style="left:915px;top:624px;width:1px;height:20px;background:#d4d4d4;"></div>
<div class="r" style="left:1037px;top:624px;width:1px;height:20px;background:#d4d4d4;"></div>
<div class="r" style="left:1159px;top:624px;width:1px;height:20px;background:#d4d4d4;"></div>
<svg class="r" style="left:20px;top:625px" width="14" height="18" viewBox="0 0 14 18"><defs><linearGradient id="g8" x1="0" y1="0" x2="0" y2="1"><stop offset="0" stop-color="#dceaf8"/><stop offset="1" stop-color="#a8ccf4"/></linearGradient></defs><path d="M1.6 2.6 Q1.6 1.1 3.1 1.1 H10.9 Q12.4 1.1 12.4 2.6 V12 L8.2 16.3 H3.1 Q1.6 16.3 1.6 14.8 Z" fill="url(#g8)" stroke="#3a88d8" stroke-width="1.2"/><path d="M4 5 h6 M4 7.5 h6" stroke="#3a88d8" stroke-width="1.1"/><path d="M8.2 16.3 V13 Q8.2 12 9.2 12 H12.4 Z" fill="#3a88d8"/></svg>
<div class="t" style="left:40px;top:627.84px;font-size:12px;color:#000;transform:scaleX(0.93);transform-origin:0 0;">bra50</div>
<div class="t" style="left:182px;top:627.84px;font-size:12px;color:#000;transform:scaleX(0.88);transform-origin:0 0;">400199987</div>
<div class="t" style="left:24px;width:400px;text-align:right;top:627.84px;font-size:12px;color:#000;transform:scaleX(0.9);transform-origin:100% 0;">2021.06.08 20:34:22</div>
<div class="t" style="left:146px;width:400px;text-align:right;top:627.84px;font-size:12px;color:#000;transform:scaleX(0.93);transform-origin:100% 0;">buy</div>
<div class="t" style="left:268px;width:400px;text-align:right;top:627.84px;font-size:12px;color:#000;transform:scaleX(0.9);transform-origin:100% 0;">1.58</div>
<div class="t" style="left:390px;width:400px;text-align:right;top:627.84px;font-size:12px;color:#000;transform:scaleX(0.88);transform-origin:100% 0;">129515</div>
<div class="t" style="left:755px;width:400px;text-align:right;top:627.84px;font-size:12px;color:#000;transform:scaleX(0.88);transform-origin:100% 0;">129760</div>
<div class="t" style="left:925px;width:400px;text-align:right;top:627.84px;font-size:12px;color:#0000ff;transform:scaleX(0.9);transform-origin:100% 0;">15.37</div>
<svg class="r" style="left:1332px;top:630px" width="9" height="9" viewBox="0 0 9 9"><path d="M1 1 L8 8 M8 1 L1 8" stroke="#808080" stroke-width="1.6"/></svg>
<div class="r" style="left:19px;top:644px;width:1326px;height:20px;background:#fff;"></div>
<div class="r" style="left:19px;top:663px;width:1326px;height:1px;background:#d4d4d4;"></div>
<div class="r" style="left:177px;top:644px;width:1px;height:20px;background:#d4d4d4;"></div>
<div class="r" style="left:287px;top:644px;width:1px;height:20px;background:#d4d4d4;"></div>
<div class="r" style="left:427px;top:644px;width:1px;height:20px;background:#d4d4d4;"></div>
<div class="r" style="left:549px;top:644px;width:1px;height:20px;background:#d4d4d4;"></div>
<div class="r" style="left:671px;top:644px;width:1px;height:20px;background:#d4d4d4;"></div>
<div class="r" style="left:793px;top:644px;width:1px;height:20px;background:#d4d4d4;"></div>
<div class="r" style="left:915px;top:644px;width:1px;height:20px;background:#d4d4d4;"></div>
<div class="r" style="left:1037px;top:644px;width:1px;height:20px;background:#d4d4d4;"></div>
<div class="r" style="left:1159px;top:644px;width:1px;height:20px;background:#d4d4d4;"></div>
<svg class="r" style="left:20px;top:645px" width="14" height="18" viewBox="0 0 14 18"><defs><linearGradient id="g9" x1="0" y1="0" x2="0" y2="1"><stop offset="0" stop-color="#dceaf8"/><stop offset="1" stop-color="#a8ccf4"/></linearGradient></defs><path d="M1.6 2.6 Q1.6 1.1 3.1 1.1 H10.9 Q12.4 1.1 12.4 2.6 V12 L8.2 16.3 H3.1 Q1.6 16.3 1.6 14.8 Z" fill="url(#g9)" stroke="#3a88d8" stroke-width="1.2"/><path d="M4 5 h6 M4 7.5 h6" stroke="#3a88d8" stroke-width="1.1"/><path d="M8.2 16.3 V13 Q8.2 12 9.2 12 H12.4 Z" fill="#3a88d8"/></svg>
<div class="t" style="left:40px;top:647.84px;font-size:12px;color:#000;transform:scaleX(0.93);transform-origin:0 0;">bra50</div>
<div class="t" style="left:182px;top:647.84px;font-size:12px;color:#000;transform:scaleX(0.88);transform-origin:0 0;">400208828</div>
<div class="t" style="left:24px;width:400px;text-align:right;top:647.84px;font-size:12px;color:#000;transform:scaleX(0.9);transform-origin:100% 0;">2021.06.08 21:00:09</div>
<div class="t" style="left:146px;width:400px;text-align:right;top:647.84px;font-size:12px;color:#000;transform:scaleX(0.93);transform-origin:100% 0;">buy</div>
<div class="t" style="left:268px;width:400px;text-align:right;top:647.84px;font-size:12px;color:#000;transform:scaleX(0.9);transform-origin:100% 0;">6</div>
<div class="t" style="left:390px;width:400px;text-align:right;top:647.84px;font-size:12px;color:#000;transform:scaleX(0.88);transform-origin:100% 0;">129585</div>
<div class="t" style="left:755px;width:400px;text-align:right;top:647.84px;font-size:12px;color:#000;transform:scaleX(0.88);transform-origin:100% 0;">129760</div>
<div class="t" style="left:925px;width:400px;text-align:right;top:647.84px;font-size:12px;color:#0000ff;transform:scaleX(0.9);transform-origin:100% 0;">41.69</div>
<svg class="r" style="left:1332px;top:650px" width="9" height="9" viewBox="0 0 9 9"><path d="M1 1 L8 8 M8 1 L1 8" stroke="#808080" stroke-width="1.6"/></svg>
<div class="r" style="left:19px;top:664px;width:1327px;height:20px;background:#c8c8c8;"></div>
<svg class="r" style="left:21px;top:667px" width="14" height="14" viewBox="0 0 14 14"><circle cx="6.5" cy="7" r="5.5" fill="none" stroke="#303030" stroke-width="1.3"/><path d="M3.5 7 h6" stroke="#303030" stroke-width="1.5"/></svg>
<div class="t" style="left:40px;top:668.01px;font-size:11.8px;color:#000;font-weight:bold">Saldo: 13 465.32 USD&nbsp; Capital Líquido: 12 946.83&nbsp; Margem: 587.10&nbsp; Margem Livre: 12 359.73&nbsp; Nível de Margem: 2 205.22 %</div>
<div class="t" style="left:924px;width:400px;text-align:right;top:668.27px;font-size:11.5px;color:#000;font-weight:bold">-518.49</div>
<div class="r" style="left:1346px;top:440px;width:17px;height:244px;background:#f0f0f0;"></div>
<div class="r" style="left:1347px;top:525px;width:15px;height:147px;background:#cdcdcd;"></div>
<svg class="r" style="left:1349.5px;top:446px" width="10" height="8" viewBox="0 0 10 8"><path d="M1.5 6 L5 2.5 L8.5 6" fill="none" stroke="#606060" stroke-width="2"/></svg>
<svg class="r" style="left:1349.5px;top:677px" width="10" height="8" viewBox="0 0 10 8"><path d="M1.5 2 L5 5.5 L8.5 2" fill="none" stroke="#606060" stroke-width="2"/></svg>
<div class="r" style="left:18px;top:684px;width:1345px;height:5px;background:#fff;"></div>
<div class="r" style="left:18px;top:689px;width:1345px;height:1px;background:#000;"></div>
<div class="r" style="left:21px;top:688px;width:83px;height:21px;background:#fff;border:1px solid #000;border-top:none"></div>
<div class="t" style="left:31px;top:694.05px;font-size:11.75px;color:#000;">Negociação</div>
<div class="t" style="left:114px;top:694.27px;font-size:11.5px;color:#6d6d6d;">Exposição</div>
<div class="t" style="left:187px;top:694.27px;font-size:11.5px;color:#6d6d6d;">Histórico</div>
<div class="t" style="left:255px;top:694.27px;font-size:11.5px;color:#6d6d6d;">Notícias</div>
<div class="t" style="left:318px;top:694.27px;font-size:11.5px;color:#6d6d6d;">Caixa de E-mail</div>
<div class="t" style="left:427px;top:694.27px;font-size:11.5px;color:#6d6d6d;">Calendário</div>
<div class="t" style="left:504px;top:694.27px;font-size:11.5px;color:#6d6d6d;">Empresa</div>
<div class="t" style="left:569px;top:694.27px;font-size:11.5px;color:#6d6d6d;">Mercado</div>
<div class="t" style="left:636px;top:694.27px;font-size:11.5px;color:#6d6d6d;">Alertas</div>
<div class="t" style="left:692px;top:694.27px;font-size:11.5px;color:#6d6d6d;">Sinais</div>
<div class="t" style="left:742px;top:694.27px;font-size:11.5px;color:#6d6d6d;">Artigos</div>
<div class="t" style="left:807px;top:694.27px;font-size:11.5px;color:#6d6d6d;">Biblioteca</div>
<div class="t" style="left:879px;top:694.27px;font-size:11.5px;color:#6d6d6d;">VPS</div>
<div class="t" style="left:918px;top:694.27px;font-size:11.5px;color:#6d6d6d;">Experts</div>
<div class="t" style="left:977px;top:694.27px;font-size:11.5px;color:#6d6d6d;">Diário</div>
<div class="r" style="left:177px;top:694px;width:1px;height:13px;background:#808080;"></div>
<div class="r" style="left:245px;top:694px;width:1px;height:13px;background:#808080;"></div>
<div class="r" style="left:308px;top:694px;width:1px;height:13px;background:#808080;"></div>
<div class="r" style="left:417px;top:694px;width:1px;height:13px;background:#808080;"></div>
<div class="r" style="left:494px;top:694px;width:1px;height:13px;background:#808080;"></div>
<div class="r" style="left:559px;top:694px;width:1px;height:13px;background:#808080;"></div>
<div class="r" style="left:626px;top:694px;width:1px;height:13px;background:#808080;"></div>
<div class="r" style="left:682px;top:694px;width:1px;height:13px;background:#808080;"></div>
<div class="r" style="left:732px;top:694px;width:1px;height:13px;background:#808080;"></div>
<div class="r" style="left:797px;top:694px;width:1px;height:13px;background:#808080;"></div>
<div class="r" style="left:869px;top:694px;width:1px;height:13px;background:#808080;"></div>
<div class="r" style="left:908px;top:694px;width:1px;height:13px;background:#808080;"></div>
<div class="r" style="left:967px;top:694px;width:1px;height:13px;background:#808080;"></div>
<div class="t" style="left:400px;top:699.38px;font-size:9px;color:#ff0000;">7</div>
<div class="t" style="left:781px;top:699.38px;font-size:9px;color:#ff0000;">1</div>
<div class="t" style="left:947px;width:400px;text-align:right;top:694.43px;font-size:11.3px;color:#000;">Testador de Estratégia</div>
<div class="r" style="left:18px;top:710px;width:1345px;height:1px;background:#fff;"></div>
<div class="r" style="left:3px;top:714px;width:1363px;height:1px;background:#a0a0a0;"></div>
<div class="r" style="left:3px;top:715px;width:1363px;height:1px;background:#fff;"></div>
<div class="t" style="left:6px;top:722.48px;font-size:11.25px;color:#000;">Para Ajuda, pressione F1</div>
<div class="r" style="left:675px;top:719px;width:1px;height:17px;background:#a0a0a0;"></div>
<div class="r" style="left:802px;top:719px;width:1px;height:17px;background:#a0a0a0;"></div>
<div class="r" style="left:900px;top:719px;width:1px;height:17px;background:#a0a0a0;"></div>
<div class="r" style="left:972px;top:719px;width:1px;height:17px;background:#a0a0a0;"></div>
<div class="r" style="left:1042px;top:719px;width:1px;height:17px;background:#a0a0a0;"></div>
<div class="r" style="left:1110px;top:719px;width:1px;height:17px;background:#a0a0a0;"></div>
<div class="r" style="left:1180px;top:719px;width:1px;height:17px;background:#a0a0a0;"></div>
<div class="r" style="left:1246px;top:719px;width:1px;height:17px;background:#a0a0a0;"></div>
<div class="t" style="left:681px;top:722.27px;font-size:11.5px;color:#000;">Default</div>
<svg class="r" style="left:1251px;top:720px" width="18" height="14" viewBox="0 0 18 14"><path d="M1 11h3v2h-3z M4 9h3v4h-3z M7 6.5h3v6.5h-3z M10 4h3v9h-3z M13 1.5h3v11.5h-3z" fill="#3cb82a" stroke="#2a9a1a" stroke-width="0.6"/></svg>
<div class="t" style="left:1271.5px;top:722.27px;font-size:11.5px;color:#000;">201.13 ms</div>
<div class="t" style="left:17px;top:-8px;font-size:11.5px;color:#000;font-weight:bold;clip-path:inset(0 0 0.5px 0);text-shadow:0 0 2px #fff">Avast</div>
<div class="r" style="left:1365px;top:117px;width:2px;height:297px;background:#f0f0f0;"></div>
<svg class="r" style="left:10px;top:8px" width="18" height="18" viewBox="10 8 18 18"><rect x="11.5" y="9.5" width="15" height="15" rx="2" fill="#2a2a2a" stroke="#3a9ae0"/><path d="M15 20 L18 13 L22 12 L24 17 L20 22 Z" fill="#3aa040"/><path d="M15 20 L18 16 L20 22 Z" fill="#e0d030"/><path d="M20 22 L24 17 L23 21 Z" fill="#4a90e0"/><rect x="22" y="11" width="3" height="2.5" fill="#fff"/></svg>
<div class="r" style="left:1248px;top:17px;width:10px;height:1px;background:#000;"></div>
<div class="r" style="left:1293px;top:12px;width:10px;height:10px;border:1px solid #000"></div>
<div class="r" style="left:1322px;top:3px;width:45px;height:29px;background:#e81123;"></div>
<svg class="r" style="left:1338px;top:11px" width="12" height="12" viewBox="0 0 12 12"><path d="M1 1 L11 11 M11 1 L1 11" stroke="#fff" stroke-width="1.1"/></svg>
<svg class="r" style="left:6px;top:33px" width="20" height="19" viewBox="6 33 20 19"><rect x="7.5" y="34.5" width="13" height="12" fill="#fff" stroke="#1a78e0"/><rect x="7" y="34" width="14" height="2" fill="#1a78e0"/><rect x="10.5" y="38.5" width="13" height="12" fill="#fff" stroke="#1a78e0"/><rect x="10" y="38" width="14" height="2" fill="#1a78e0"/><path d="M11.5 43.5 h12 M11.5 46.5 h12 M14.5 41 v9 M17.5 41 v9 M20.5 41 v9" stroke="#d8d8d8" stroke-width="0.6"/><polyline points="12,47 14,45 16,46.5 18,44.5 20,46 23,43.5" fill="none" stroke="#f04a1a" stroke-width="1.4"/></svg>
<svg class="r" style="left:9px;top:360px" width="42" height="50" viewBox="9 360 42 50"><rect x="11.5" y="362.5" width="12" height="11" fill="#fff" stroke="#1a78e0"/><rect x="11" y="362" width="13" height="2" fill="#1a78e0"/><rect x="14.5" y="366.5" width="12" height="11" fill="#fff" stroke="#1a78e0"/><rect x="14" y="366" width="13" height="2" fill="#1a78e0"/><polyline points="15.5,374 18,372 20,373.5 22,371.5 26,373" fill="none" stroke="#f04a1a" stroke-width="1.2"/><path d="M19.5 379 V409 M25 389.5 h5 M25 407.5 h5" stroke="#808080" stroke-width="1" stroke-dasharray="1 1"/><rect x="15.5" y="385.5" width="8" height="8" fill="#f4f4f4" stroke="#909090"/><path d="M17 389.5 h5 M19.5 387 v5" stroke="#2a3aa0" stroke-width="1"/><rect x="15.5" y="403.5" width="8" height="8" fill="#f4f4f4" stroke="#909090"/><path d="M17 407.5 h5 M19.5 405 v5" stroke="#2a3aa0" stroke-width="1"/><circle cx="37" cy="384" r="3.3" fill="#3aa83a"/><path d="M32 393 Q32 387 37 387 Q42 387 42 393 Z" fill="#3aa83a"/><circle cx="43" cy="386" r="3.3" fill="#4ab84a"/><path d="M38 395 Q38 389 43 389 Q48 389 48 395 Z" fill="#4ab84a"/><rect x="32.5" y="399.5" width="12" height="12" rx="1" fill="#f6cc3a" stroke="#c89a10"/><text x="38.5" y="409" font-family="Liberation Serif" font-style="italic" font-size="10" fill="#303030" text-anchor="middle">f</text></svg>
<svg class="r" style="left:1354px;top:726px" width="12" height="11" viewBox="0 0 12 11"><path d="M9 2h2v2h-2z M6 5h2v2h-2z M9 5h2v2h-2z M3 8h2v2h-2z M6 8h2v2h-2z M9 8h2v2h-2z" fill="#b0b0b0"/></svg>
<svg class="r" style="left:0;top:0" width="1370" height="80" viewBox="0 0 1370 80"><path d="M1137.6 25.7 H1206.5 V11.6 L1275.3 40 L1206.5 69.1 V54.3 H1137.6 Z" fill="none" stroke="#ec1c24" stroke-width="5" stroke-linejoin="round"/><path d="M1298.5 2.3 H1372 M1298.5 2.3 V42.3 H1372" fill="none" stroke="#ec1c24" stroke-width="5"/><rect x="1367" y="4" width="1" height="37" fill="#1f3f66"/><rect x="1368" y="0" width="2" height="45" fill="#ec1c24"/></svg>
<div class="r" style="left:1337px;top:45px;width:40px;height:15px;background:#ffffe1;border:1px solid #767676;border-top:none;border-right:none"></div>
<div class="t" style="left:1341px;top:45.27px;font-size:11.5px;color:#000;">Fecha</div></body></html>
